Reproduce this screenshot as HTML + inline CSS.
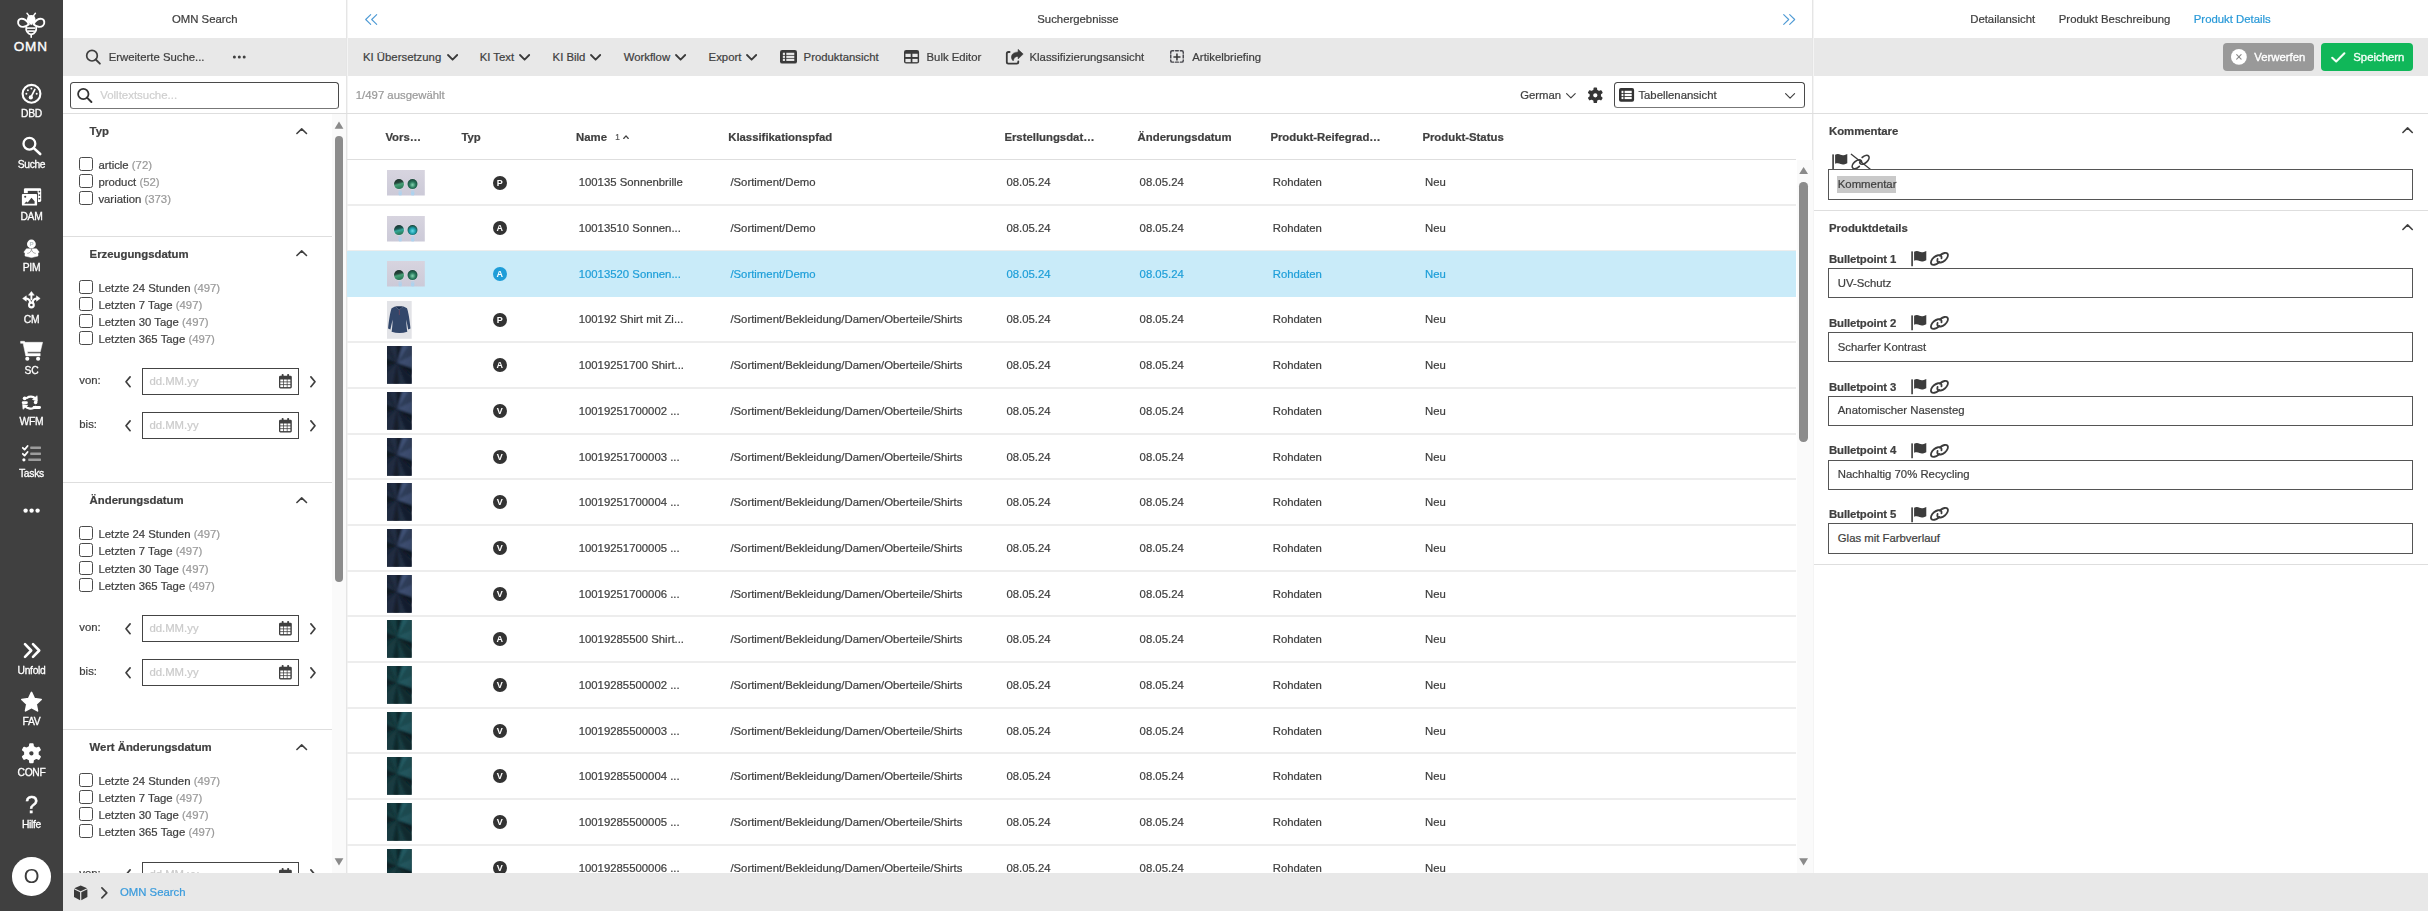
<!DOCTYPE html>
<html lang="de"><head><meta charset="utf-8"><title>OMN Search</title>
<style>
*{box-sizing:border-box;margin:0;padding:0}
html,body{width:2428px;height:911px;overflow:hidden;background:#fff}
body{font-family:"Liberation Sans",sans-serif;font-size:11.35px;color:#3f3f3f;position:relative;line-height:1}
#app{position:absolute;left:0;top:0;width:2428px;height:911px;overflow:hidden;filter:blur(0.38px)}
.a{position:absolute}
.t{position:absolute;white-space:nowrap;line-height:14px;height:14px;-webkit-text-stroke:0.22px}
.b{font-weight:bold}
.g{color:#9a9a9a}
.bl{color:#1f9fd9}
.hl{position:absolute;height:2px;background:#ededed;margin-top:-0.5px}
.hl1{position:absolute;height:1px;background:#dedede}
.vl{position:absolute;width:2px;background:linear-gradient(to right,#e5e5e5 50%,#f4f4f4 50%)}
.cb{position:absolute;width:14px;height:14px;border:1px solid #4a4a4a;border-radius:2.5px;background:#fff}
.di{position:absolute;left:142px;width:157px;height:27px;border:1px solid #444;background:#fff}
.inp{position:absolute;left:1828px;width:585px;height:30px;border:1px solid #555;background:#fff}
.nav{position:absolute;left:0;top:0;width:63px;height:911px;background:#404040}
.nl{position:absolute;left:0;width:63px;text-align:center;color:#fff;font-size:10.3px;line-height:12px;height:12px;letter-spacing:-0.25px;-webkit-text-stroke:0.3px #fff}
svg{position:absolute;overflow:visible}
.clip{position:absolute;overflow:hidden}
</style></head>
<body>
<div id="app">
<div class="a" style="left:63px;top:38.2px;width:2365px;height:37.6px;background:#e8e8e8"></div>
<div class="a" style="left:63px;top:873.3px;width:2365px;height:38px;background:#e8e8e8"></div>
<div class="vl" style="left:346px;top:0;height:873.3px"></div>
<div class="vl" style="left:1812px;top:0;height:873.3px"></div>
<div class="hl1" style="left:63px;top:113px;width:2365px"></div>
<div class="nav"></div>
<svg style="left:0;top:0" width="63" height="911" viewBox="0 0 63 911"><g fill="none" stroke="#fff" stroke-width="1.9" stroke-linejoin="round">
<path d="M28.900 24.300 C27.400 20.300 23.600 18.300 20.600 18.900 C17.600 19.500 17.400 23.700 19.400 25.600 C21.800 27.800 26 27 28.900 24.300 Z"/>
<path d="M33.500 24.300 C35 20.300 38.800 18.300 41.800 18.900 C44.800 19.500 45 23.700 43 25.600 C40.600 27.800 36.400 27 33.500 24.300 Z"/>
<path d="M26.200 26.400 C25.600 30.600 27.600 33.600 31.200 34.600 C34.800 33.600 36.800 30.600 36.200 26.400" stroke-width="1.7"/>
<path d="M31.200 34.400 L31.200 37.300" stroke-width="1.600" stroke-linecap="round"/>
</g>
<circle cx="31.200" cy="19.300" r="4.300" fill="#fff"/>
<path d="M27.300 21 L31.200 25.200 L35.100 21 Z" fill="#fff"/>
<path d="M27 13.300 L29.600 16.600 M35.400 13.300 L32.800 16.600" stroke="#fff" stroke-width="1.500" stroke-linecap="round"/>
<rect x="27" y="27.300" width="8.400" height="1.600" fill="#fff"/>
<rect x="27.500" y="30.300" width="7.400" height="1.600" fill="#fff"/></svg>
<div class="a" style="left:-1.1px;top:38.6px;width:63px;text-align:center;color:#fff;font-size:13.6px;line-height:15px;letter-spacing:0.7px;padding-left:0.7px;-webkit-text-stroke:0.35px #fff">OMN</div>
<svg style="left:0;top:0" width="63" height="911" viewBox="0 0 63 911"><circle cx="31.5" cy="93.8" r="8.9" fill="none" stroke="#fff" stroke-width="2.1"/>
<circle cx="30.8" cy="97.4" r="2.1" fill="#fff"/>
<path d="M30.8 97.400 L34.9 89.4" stroke="#fff" stroke-width="1.7" stroke-linecap="round"/>
<circle cx="26.4" cy="93.8" r="1" fill="#fff"/><circle cx="27.9" cy="90.2" r="1" fill="#fff"/><circle cx="31.4" cy="88.6" r="1" fill="#fff"/><circle cx="36.7" cy="93.8" r="1" fill="#fff"/></svg>
<div class="nl" style="top:108.00px;letter-spacing:-0.25px">DBD</div>
<svg style="left:0;top:0" width="63" height="911" viewBox="0 0 63 911"><circle cx="29.4" cy="143.7" r="5.9" fill="none" stroke="#fff" stroke-width="2.3"/><path d="M33.8 148.1 L40.2 154" stroke="#fff" stroke-width="2.6" stroke-linecap="round"/></svg>
<div class="nl" style="top:159.00px;letter-spacing:-0.35px">Suche</div>
<svg style="left:0;top:0" width="63" height="911" viewBox="0 0 63 911"><rect x="23.900" y="188.200" width="17.300" height="13.700" rx="1.300" fill="#fff"/>
<rect x="27.800" y="190.900" width="9.800" height="11.500" fill="#404040"/>
<circle cx="39.400" cy="191.600" r="0.850" fill="#404040"/><circle cx="39.400" cy="195.100" r="0.850" fill="#404040"/><circle cx="39.400" cy="198.600" r="0.850" fill="#404040"/>
<rect x="21" y="193.100" width="17" height="13.400" fill="#404040"/>
<rect x="21.900" y="194" width="15.200" height="11.600" rx="0.900" fill="#fff"/>
<path d="M24.300 203.700 L26.300 201.400 L27.700 202.400 L31.500 197.700 L34.600 201.300 L34.600 203.700 Z" fill="#404040"/><circle cx="25.200" cy="196.700" r="1.050" fill="#404040"/></svg>
<div class="nl" style="top:211.00px;letter-spacing:-0.25px">DAM</div>
<svg style="left:0;top:0" width="63" height="911" viewBox="0 0 63 911"><circle cx="31.400" cy="244" r="4.400" fill="#fff"/>
<text x="31.500" y="246.300" font-size="6.200" font-weight="bold" text-anchor="middle" fill="#b4c0c2" font-family="Liberation Sans, sans-serif">P</text>
<path d="M23.900 252.100 L26.400 248.800 L36.600 248.800 L39.200 252.100 L38 253.300 L38 256 L31.500 257.600 L25 256 L25 253.300 Z" fill="#fff" stroke="#fff" stroke-width="0.500" stroke-linejoin="round"/>
<path d="M31.500 248.600 C31.400 251.600 29.800 253.200 27.200 253.400 M31.500 248.600 C31.600 251.600 33.200 253.200 35.800 253.400" fill="none" stroke="#6a6a6a" stroke-width="0.550"/></svg>
<div class="nl" style="top:262.00px;letter-spacing:-0.25px">PIM</div>
<svg style="left:0;top:0" width="63" height="911" viewBox="0 0 63 911"><g fill="none" stroke="#fff" stroke-width="2.100" stroke-linecap="round" stroke-linejoin="round">
<circle cx="31.400" cy="305" r="2.350"/>
<path d="M31.400 299.400 L31.400 294.500" stroke-width="1.900"/>
<path d="M30.200 302.600 C29.800 299.600 28.400 298.500 25.600 298.500"/>
<path d="M32.600 302.600 C33 299.600 34.400 298.500 37.200 298.500"/>
</g>
<path d="M31.400 291.500 L34.300 295.200 L28.500 295.200 Z" fill="#fff" stroke="#fff" stroke-width="0.500" stroke-linejoin="round"/>
<path d="M22.600 298.500 L26.300 295.800 L26.300 301.200 Z" fill="#fff" stroke="#fff" stroke-width="0.500" stroke-linejoin="round"/>
<path d="M40.200 298.500 L36.500 295.800 L36.500 301.200 Z" fill="#fff" stroke="#fff" stroke-width="0.500" stroke-linejoin="round"/></svg>
<div class="nl" style="top:314.00px;letter-spacing:-0.25px">CM</div>
<svg style="left:0;top:0" width="63" height="911" viewBox="0 0 63 911"><path d="M20.600 341.300 L24.400 341.300 L25.100 342.300 L42.600 342.300 L40.300 351.800 L27.400 351.800 L27.700 353.400 L40.200 353.400 L40.200 355.900 L25.800 355.900 L23.100 343.300 L20.600 343.300 Z" fill="#fff" stroke="#fff" stroke-width="0.500" stroke-linejoin="round"/>
<circle cx="27.300" cy="358.800" r="2.050" fill="#fff"/><circle cx="38.100" cy="358.800" r="2.050" fill="#fff"/></svg>
<div class="nl" style="top:365.00px;letter-spacing:-0.25px">SC</div>
<svg style="left:0;top:0" width="63" height="911" viewBox="0 0 63 911"><g fill="none" stroke="#fff" stroke-width="2.2" stroke-linecap="round">
<path d="M27 397.800 C29.200 396.200 33 396.200 35.200 398.300"/>
<path d="M25 405.800 C27 408.600 31 409.200 33.600 408"/>
</g>
<path d="M37.100 395.700 L37.400 401.300 L32.500 399.500 Z" fill="#fff" stroke="#fff" stroke-width="0.6" stroke-linejoin="round"/>
<path d="M22.600 404.500 L27.800 405.300 L23 409.300 Z" fill="#fff" stroke="#fff" stroke-width="0.6" stroke-linejoin="round"/>
<circle cx="24.700" cy="398.300" r="1.900" fill="#fff"/><rect x="21.800" y="401.200" width="6" height="2.900" rx="1.300" fill="#fff"/>
<circle cx="35.600" cy="402.400" r="1.800" fill="#fff"/><path d="M32.800 408.700 C32.800 404.800 38.400 404.800 38.400 408.700 Z" fill="#fff"/><rect x="32.600" y="406" width="8.400" height="2.900" rx="1.400" fill="#fff"/></svg>
<div class="nl" style="top:416.00px;letter-spacing:-0.25px">WFM</div>
<svg style="left:0;top:0" width="63" height="911" viewBox="0 0 63 911"><g fill="none" stroke="#fff" stroke-width="1.8" stroke-linecap="round" stroke-linejoin="round">
<path d="M22.800 447.8 L24.6 449.600 L27.600 446"/><path d="M22.800 453.8 L24.6 455.600 L27.600 452"/></g>
<circle cx="23.9" cy="459.8" r="1.6" fill="#fff"/>
<rect x="30.2" y="446.400" width="10.8" height="2.5" rx="0.6" fill="#9c9c9c"/><rect x="30.2" y="452.4" width="10.8" height="2.5" rx="0.6" fill="#9c9c9c"/><rect x="28.2" y="458.4" width="12.8" height="2.5" rx="0.6" fill="#9c9c9c"/></svg>
<div class="nl" style="top:468.00px;letter-spacing:-0.25px">Tasks</div>
<svg style="left:0;top:0" width="63" height="911" viewBox="0 0 63 911"><circle cx="25.6" cy="510.6" r="2.2" fill="#fff"/><circle cx="31.6" cy="510.6" r="2.2" fill="#fff"/><circle cx="37.6" cy="510.6" r="2.2" fill="#fff"/></svg>
<svg style="left:0;top:0" width="63" height="911" viewBox="0 0 63 911"><g fill="none" stroke="#fff" stroke-width="2.6" stroke-linecap="round" stroke-linejoin="round"><path d="M25 644.2 L31.2 650.5 L25 656.8"/><path d="M33 644.2 L39.2 650.5 L33 656.8"/></g></svg>
<div class="nl" style="top:665.00px;letter-spacing:-0.3px">Unfold</div>
<svg style="left:0;top:0" width="63" height="911" viewBox="0 0 63 911"><path d="M31.50 692.40 L34.38 698.64 L41.20 699.45 L36.16 704.11 L37.50 710.85 L31.50 707.50 L25.50 710.85 L26.84 704.11 L21.80 699.45 L28.62 698.64Z" fill="#fff" stroke="#fff" stroke-width="1.6" stroke-linejoin="round"/></svg>
<div class="nl" style="top:716.00px;letter-spacing:-0.25px">FAV</div>
<svg style="left:0;top:0" width="1" height="1"><path d="M30.04 744.11 L32.76 744.11 L33.13 746.86 L36.11 748.59 L38.68 747.53 L40.04 749.88 L37.84 751.57 L37.84 755.03 L40.04 756.72 L38.68 759.07 L36.11 758.01 L33.13 759.74 L32.76 762.49 L30.04 762.49 L29.67 759.74 L26.69 758.01 L24.12 759.07 L22.76 756.72 L24.96 755.03 L24.96 751.57 L22.76 749.88 L24.12 747.53 L26.69 748.59 L29.67 746.86Z M28.37 753.30 a3.03 3.03 0 1 0 6.06 0 a3.03 3.03 0 1 0 -6.06 0Z" fill="#fff" fill-rule="evenodd" stroke="#fff" stroke-width="1.72" stroke-linejoin="round"/></svg>
<div class="nl" style="top:767.00px;letter-spacing:-0.3px">CONF</div>
<div class="a" style="left:0;top:792.00px;width:63px;text-align:center;color:#fff;font-size:23.5px;line-height:26px;height:26px;-webkit-text-stroke:0.4px #fff">?</div>
<div class="nl" style="top:819.00px;letter-spacing:-0.3px">Hilfe</div>
<div class="a" style="left:12.2px;top:857.2px;width:38.5px;height:38.5px;border-radius:50%;background:#fff"></div>
<div class="a" style="left:0;top:864.00px;width:63px;text-align:center;color:#3c3c3c;font-size:20.2px;line-height:24px;height:24px;padding-left:0.2px">O</div>
<div class="t " style="left:172.0px;top:12.00px;">OMN Search</div>
<svg style="left:0;top:0" width="1" height="1"><circle cx="92.0" cy="55.7" r="5.3" fill="none" stroke="#3f3f3f" stroke-width="1.7"/><path d="M95.72 59.47 L99.9 63.7" stroke="#3f3f3f" stroke-width="1.87" stroke-linecap="round"/></svg>
<div class="t " style="left:108.7px;top:50.00px;">Erweiterte Suche...</div>
<svg style="left:0;top:0" width="1" height="1"><circle cx="234.4" cy="57" r="1.5" fill="#3f3f3f"/><circle cx="239.3" cy="57" r="1.5" fill="#3f3f3f"/><circle cx="244.2" cy="57" r="1.5" fill="#3f3f3f"/></svg>
<div class="a" style="left:70px;top:82px;width:268.6px;height:26.6px;border:1px solid #4a4a4a;border-bottom:1.6px solid #777;border-radius:3.5px;background:#fff"></div>
<svg style="left:0;top:0" width="1" height="1"><circle cx="83.3" cy="94.0" r="5.2" fill="none" stroke="#333" stroke-width="1.8"/><path d="M87.00 97.65 L91.4 102.0" stroke="#333" stroke-width="1.98" stroke-linecap="round"/></svg>
<div class="t " style="left:100.2px;top:88.00px;font-size:11.45px;color:#cfcfcf">Volltextsuche...</div>
<div class="clip" style="left:63px;top:114px;width:283px;height:759.4px">
<div class="t b" style="left:26.6px;top:10.00px;">Typ</div>
<svg style="left:233.3px;top:13.7px" width="11.4" height="6.4" viewBox="0 0 11.4 6.4"><path d="M0.9 5.5 L5.7 0.9 L10.5 5.5" fill="none" stroke="#3f3f3f" stroke-width="1.6" stroke-linecap="round" stroke-linejoin="round"/></svg>
<div class="cb" style="left:16.2px;top:43.0px"></div>
<div class="t " style="left:35.4px;top:44.00px;">article <span class="g">(72)</span></div>
<div class="cb" style="left:16.2px;top:60.2px"></div>
<div class="t " style="left:35.4px;top:61.00px;">product <span class="g">(52)</span></div>
<div class="cb" style="left:16.2px;top:77.3px"></div>
<div class="t " style="left:35.4px;top:78.00px;">variation <span class="g">(373)</span></div>
<div class="hl1" style="left:0;top:121.5px;width:269px"></div>
<div class="t b" style="left:26.6px;top:133.00px;">Erzeugungsdatum</div>
<svg style="left:233.3px;top:136.3px" width="11.4" height="6.4" viewBox="0 0 11.4 6.4"><path d="M0.9 5.5 L5.7 0.9 L10.5 5.5" fill="none" stroke="#3f3f3f" stroke-width="1.6" stroke-linecap="round" stroke-linejoin="round"/></svg>
<div class="cb" style="left:16.2px;top:165.6px"></div>
<div class="t " style="left:35.4px;top:167.00px;">Letzte 24 Stunden <span class="g">(497)</span></div>
<div class="cb" style="left:16.2px;top:182.8px"></div>
<div class="t " style="left:35.4px;top:184.00px;">Letzten 7 Tage <span class="g">(497)</span></div>
<div class="cb" style="left:16.2px;top:199.9px"></div>
<div class="t " style="left:35.4px;top:201.00px;">Letzten 30 Tage <span class="g">(497)</span></div>
<div class="cb" style="left:16.2px;top:217.0px"></div>
<div class="t " style="left:35.4px;top:218.00px;">Letzten 365 Tage <span class="g">(497)</span></div>
<div class="t " style="left:16.3px;top:259.00px;">von:</div>
<svg style="left:61.6px;top:262.0px" width="6" height="11.6" viewBox="0 0 6 11.6"><path d="M5.1 0.9 L1 5.8 L5.1 10.7" fill="none" stroke="#3f3f3f" stroke-width="1.7" stroke-linecap="round" stroke-linejoin="round"/></svg>
<div class="di" style="left:79px;top:254.4px"></div>
<div class="t " style="left:86.4px;top:260.00px;color:#cbcbcb">dd.MM.yy</div>
<svg style="left:215.7px;top:260.3px" width="12.8" height="14.4" viewBox="0 0 12.8 14.4"><rect x="2.7" y="0" width="1.9" height="3.4" rx="0.8" fill="#3f3f3f"/><rect x="8.2" y="0" width="1.9" height="3.4" rx="0.8" fill="#3f3f3f"/><rect x="0" y="1.7" width="12.8" height="12.7" rx="1.4" fill="#3f3f3f"/><rect x="1.30" y="5.50" width="2.9" height="2.0" fill="#fff"/><rect x="1.30" y="8.30" width="2.9" height="2.0" fill="#fff"/><rect x="1.30" y="11.10" width="2.9" height="2.0" fill="#fff"/><rect x="4.90" y="5.50" width="2.9" height="2.0" fill="#fff"/><rect x="4.90" y="8.30" width="2.9" height="2.0" fill="#fff"/><rect x="4.90" y="11.10" width="2.9" height="2.0" fill="#fff"/><rect x="8.50" y="5.50" width="2.9" height="2.0" fill="#fff"/><rect x="8.50" y="8.30" width="2.9" height="2.0" fill="#fff"/><rect x="8.50" y="11.10" width="2.9" height="2.0" fill="#fff"/></svg>
<svg style="left:247.2px;top:262.0px" width="6" height="11.6" viewBox="0 0 6 11.6"><path d="M0.9 0.9 L5 5.8 L0.900 10.7" fill="none" stroke="#3f3f3f" stroke-width="1.7" stroke-linecap="round" stroke-linejoin="round"/></svg>
<div class="t " style="left:16.3px;top:303.00px;">bis:</div>
<svg style="left:61.6px;top:306.0px" width="6" height="11.6" viewBox="0 0 6 11.6"><path d="M5.1 0.9 L1 5.8 L5.1 10.7" fill="none" stroke="#3f3f3f" stroke-width="1.7" stroke-linecap="round" stroke-linejoin="round"/></svg>
<div class="di" style="left:79px;top:298.4px"></div>
<div class="t " style="left:86.4px;top:304.00px;color:#cbcbcb">dd.MM.yy</div>
<svg style="left:215.7px;top:304.3px" width="12.8" height="14.4" viewBox="0 0 12.8 14.4"><rect x="2.7" y="0" width="1.9" height="3.4" rx="0.8" fill="#3f3f3f"/><rect x="8.2" y="0" width="1.9" height="3.4" rx="0.8" fill="#3f3f3f"/><rect x="0" y="1.7" width="12.8" height="12.7" rx="1.4" fill="#3f3f3f"/><rect x="1.30" y="5.50" width="2.9" height="2.0" fill="#fff"/><rect x="1.30" y="8.30" width="2.9" height="2.0" fill="#fff"/><rect x="1.30" y="11.10" width="2.9" height="2.0" fill="#fff"/><rect x="4.90" y="5.50" width="2.9" height="2.0" fill="#fff"/><rect x="4.90" y="8.30" width="2.9" height="2.0" fill="#fff"/><rect x="4.90" y="11.10" width="2.9" height="2.0" fill="#fff"/><rect x="8.50" y="5.50" width="2.9" height="2.0" fill="#fff"/><rect x="8.50" y="8.30" width="2.9" height="2.0" fill="#fff"/><rect x="8.50" y="11.10" width="2.9" height="2.0" fill="#fff"/></svg>
<svg style="left:247.2px;top:306.0px" width="6" height="11.6" viewBox="0 0 6 11.6"><path d="M0.9 0.9 L5 5.8 L0.900 10.7" fill="none" stroke="#3f3f3f" stroke-width="1.7" stroke-linecap="round" stroke-linejoin="round"/></svg>
<div class="hl1" style="left:0;top:368.1px;width:269px"></div>
<div class="t b" style="left:26.6px;top:379.00px;">Änderungsdatum</div>
<svg style="left:233.3px;top:382.9px" width="11.4" height="6.4" viewBox="0 0 11.4 6.4"><path d="M0.9 5.5 L5.7 0.9 L10.5 5.5" fill="none" stroke="#3f3f3f" stroke-width="1.6" stroke-linecap="round" stroke-linejoin="round"/></svg>
<div class="cb" style="left:16.2px;top:412.2px"></div>
<div class="t " style="left:35.4px;top:413.00px;">Letzte 24 Stunden <span class="g">(497)</span></div>
<div class="cb" style="left:16.2px;top:429.4px"></div>
<div class="t " style="left:35.4px;top:430.00px;">Letzten 7 Tage <span class="g">(497)</span></div>
<div class="cb" style="left:16.2px;top:446.5px"></div>
<div class="t " style="left:35.4px;top:448.00px;">Letzten 30 Tage <span class="g">(497)</span></div>
<div class="cb" style="left:16.2px;top:463.6px"></div>
<div class="t " style="left:35.4px;top:465.00px;">Letzten 365 Tage <span class="g">(497)</span></div>
<div class="t " style="left:16.3px;top:506.00px;">von:</div>
<svg style="left:61.6px;top:508.6px" width="6" height="11.6" viewBox="0 0 6 11.6"><path d="M5.1 0.9 L1 5.8 L5.1 10.7" fill="none" stroke="#3f3f3f" stroke-width="1.7" stroke-linecap="round" stroke-linejoin="round"/></svg>
<div class="di" style="left:79px;top:501.0px"></div>
<div class="t " style="left:86.4px;top:507.00px;color:#cbcbcb">dd.MM.yy</div>
<svg style="left:215.7px;top:506.9px" width="12.8" height="14.4" viewBox="0 0 12.8 14.4"><rect x="2.7" y="0" width="1.9" height="3.4" rx="0.8" fill="#3f3f3f"/><rect x="8.2" y="0" width="1.9" height="3.4" rx="0.8" fill="#3f3f3f"/><rect x="0" y="1.7" width="12.8" height="12.7" rx="1.4" fill="#3f3f3f"/><rect x="1.30" y="5.50" width="2.9" height="2.0" fill="#fff"/><rect x="1.30" y="8.30" width="2.9" height="2.0" fill="#fff"/><rect x="1.30" y="11.10" width="2.9" height="2.0" fill="#fff"/><rect x="4.90" y="5.50" width="2.9" height="2.0" fill="#fff"/><rect x="4.90" y="8.30" width="2.9" height="2.0" fill="#fff"/><rect x="4.90" y="11.10" width="2.9" height="2.0" fill="#fff"/><rect x="8.50" y="5.50" width="2.9" height="2.0" fill="#fff"/><rect x="8.50" y="8.30" width="2.9" height="2.0" fill="#fff"/><rect x="8.50" y="11.10" width="2.9" height="2.0" fill="#fff"/></svg>
<svg style="left:247.2px;top:508.6px" width="6" height="11.6" viewBox="0 0 6 11.6"><path d="M0.9 0.9 L5 5.8 L0.900 10.7" fill="none" stroke="#3f3f3f" stroke-width="1.7" stroke-linecap="round" stroke-linejoin="round"/></svg>
<div class="t " style="left:16.3px;top:550.00px;">bis:</div>
<svg style="left:61.6px;top:552.6px" width="6" height="11.6" viewBox="0 0 6 11.6"><path d="M5.1 0.9 L1 5.8 L5.1 10.7" fill="none" stroke="#3f3f3f" stroke-width="1.7" stroke-linecap="round" stroke-linejoin="round"/></svg>
<div class="di" style="left:79px;top:545.0px"></div>
<div class="t " style="left:86.4px;top:551.00px;color:#cbcbcb">dd.MM.yy</div>
<svg style="left:215.7px;top:550.9px" width="12.8" height="14.4" viewBox="0 0 12.8 14.4"><rect x="2.7" y="0" width="1.9" height="3.4" rx="0.8" fill="#3f3f3f"/><rect x="8.2" y="0" width="1.9" height="3.4" rx="0.8" fill="#3f3f3f"/><rect x="0" y="1.7" width="12.8" height="12.7" rx="1.4" fill="#3f3f3f"/><rect x="1.30" y="5.50" width="2.9" height="2.0" fill="#fff"/><rect x="1.30" y="8.30" width="2.9" height="2.0" fill="#fff"/><rect x="1.30" y="11.10" width="2.9" height="2.0" fill="#fff"/><rect x="4.90" y="5.50" width="2.9" height="2.0" fill="#fff"/><rect x="4.90" y="8.30" width="2.9" height="2.0" fill="#fff"/><rect x="4.90" y="11.10" width="2.9" height="2.0" fill="#fff"/><rect x="8.50" y="5.50" width="2.9" height="2.0" fill="#fff"/><rect x="8.50" y="8.30" width="2.9" height="2.0" fill="#fff"/><rect x="8.50" y="11.10" width="2.9" height="2.0" fill="#fff"/></svg>
<svg style="left:247.2px;top:552.6px" width="6" height="11.6" viewBox="0 0 6 11.6"><path d="M0.9 0.9 L5 5.8 L0.900 10.7" fill="none" stroke="#3f3f3f" stroke-width="1.7" stroke-linecap="round" stroke-linejoin="round"/></svg>
<div class="hl1" style="left:0;top:614.7px;width:269px"></div>
<div class="t b" style="left:26.6px;top:626.00px;">Wert Änderungsdatum</div>
<svg style="left:233.3px;top:629.5px" width="11.4" height="6.4" viewBox="0 0 11.4 6.4"><path d="M0.9 5.5 L5.7 0.9 L10.5 5.5" fill="none" stroke="#3f3f3f" stroke-width="1.6" stroke-linecap="round" stroke-linejoin="round"/></svg>
<div class="cb" style="left:16.2px;top:658.8px"></div>
<div class="t " style="left:35.4px;top:660.00px;">Letzte 24 Stunden <span class="g">(497)</span></div>
<div class="cb" style="left:16.2px;top:676.0px"></div>
<div class="t " style="left:35.4px;top:677.00px;">Letzten 7 Tage <span class="g">(497)</span></div>
<div class="cb" style="left:16.2px;top:693.1px"></div>
<div class="t " style="left:35.4px;top:694.00px;">Letzten 30 Tage <span class="g">(497)</span></div>
<div class="cb" style="left:16.2px;top:710.2px"></div>
<div class="t " style="left:35.4px;top:711.00px;">Letzten 365 Tage <span class="g">(497)</span></div>
<div class="t " style="left:16.3px;top:752.00px;">von:</div>
<svg style="left:61.6px;top:755.2px" width="6" height="11.6" viewBox="0 0 6 11.6"><path d="M5.1 0.9 L1 5.8 L5.1 10.7" fill="none" stroke="#3f3f3f" stroke-width="1.7" stroke-linecap="round" stroke-linejoin="round"/></svg>
<div class="di" style="left:79px;top:747.6px"></div>
<div class="t " style="left:86.4px;top:753.00px;color:#cbcbcb">dd.MM.yy</div>
<svg style="left:215.7px;top:753.5px" width="12.8" height="14.4" viewBox="0 0 12.8 14.4"><rect x="2.7" y="0" width="1.9" height="3.4" rx="0.8" fill="#3f3f3f"/><rect x="8.2" y="0" width="1.9" height="3.4" rx="0.8" fill="#3f3f3f"/><rect x="0" y="1.7" width="12.8" height="12.7" rx="1.4" fill="#3f3f3f"/><rect x="1.30" y="5.50" width="2.9" height="2.0" fill="#fff"/><rect x="1.30" y="8.30" width="2.9" height="2.0" fill="#fff"/><rect x="1.30" y="11.10" width="2.9" height="2.0" fill="#fff"/><rect x="4.90" y="5.50" width="2.9" height="2.0" fill="#fff"/><rect x="4.90" y="8.30" width="2.9" height="2.0" fill="#fff"/><rect x="4.90" y="11.10" width="2.9" height="2.0" fill="#fff"/><rect x="8.50" y="5.50" width="2.9" height="2.0" fill="#fff"/><rect x="8.50" y="8.30" width="2.9" height="2.0" fill="#fff"/><rect x="8.50" y="11.10" width="2.9" height="2.0" fill="#fff"/></svg>
<svg style="left:247.2px;top:755.2px" width="6" height="11.6" viewBox="0 0 6 11.6"><path d="M0.9 0.9 L5 5.8 L0.900 10.7" fill="none" stroke="#3f3f3f" stroke-width="1.7" stroke-linecap="round" stroke-linejoin="round"/></svg>
<div class="t " style="left:16.3px;top:796.00px;">bis:</div>
<svg style="left:61.6px;top:799.2px" width="6" height="11.6" viewBox="0 0 6 11.6"><path d="M5.1 0.9 L1 5.8 L5.1 10.7" fill="none" stroke="#3f3f3f" stroke-width="1.7" stroke-linecap="round" stroke-linejoin="round"/></svg>
<div class="di" style="left:79px;top:791.6px"></div>
<div class="t " style="left:86.4px;top:797.00px;color:#cbcbcb">dd.MM.yy</div>
<svg style="left:215.7px;top:797.5px" width="12.8" height="14.4" viewBox="0 0 12.8 14.4"><rect x="2.7" y="0" width="1.9" height="3.4" rx="0.8" fill="#3f3f3f"/><rect x="8.2" y="0" width="1.9" height="3.4" rx="0.8" fill="#3f3f3f"/><rect x="0" y="1.7" width="12.8" height="12.7" rx="1.4" fill="#3f3f3f"/><rect x="1.30" y="5.50" width="2.9" height="2.0" fill="#fff"/><rect x="1.30" y="8.30" width="2.9" height="2.0" fill="#fff"/><rect x="1.30" y="11.10" width="2.9" height="2.0" fill="#fff"/><rect x="4.90" y="5.50" width="2.9" height="2.0" fill="#fff"/><rect x="4.90" y="8.30" width="2.9" height="2.0" fill="#fff"/><rect x="4.90" y="11.10" width="2.9" height="2.0" fill="#fff"/><rect x="8.50" y="5.50" width="2.9" height="2.0" fill="#fff"/><rect x="8.50" y="8.30" width="2.9" height="2.0" fill="#fff"/><rect x="8.50" y="11.10" width="2.9" height="2.0" fill="#fff"/></svg>
<svg style="left:247.2px;top:799.2px" width="6" height="11.6" viewBox="0 0 6 11.6"><path d="M0.9 0.9 L5 5.8 L0.900 10.7" fill="none" stroke="#3f3f3f" stroke-width="1.7" stroke-linecap="round" stroke-linejoin="round"/></svg>
</div>
<div class="a" style="left:332px;top:114px;width:14px;height:759.3px;background:#fafafa"></div>
<svg style="left:0;top:0" width="1" height="1"><path d="M334.600 128.8 L343.4 128.8 L339 121.600 Z" fill="#8a8a8a"/><path d="M334.600 858.2 L343.4 858.2 L339 865.4 Z" fill="#8a8a8a"/></svg>
<div class="a" style="left:335px;top:136.2px;width:8.2px;height:445.6px;border-radius:4.1px;background:#8c8c8c"></div>
<svg style="left:74px;top:885.3px" width="13.4" height="15.3" viewBox="0 0 13.4 15.3"><path d="M6.7 0.4 L13.1 3.2 L6.7 6.2 L0.3 3.2 Z" fill="#3a3a3a"/><path d="M0 4.3 L6.1 7.2 L6.100 15.2 L0 12 Z" fill="#3a3a3a"/><path d="M13.400 4.3 L7.300 7.2 L7.300 15.2 L13.400 12 Z" fill="#3a3a3a"/></svg>
<svg style="left:100.8px;top:887px" width="6.8" height="11.8" viewBox="0 0 6.8 11.8"><path d="M0.900 0.900 L5.8 5.9 L0.900 10.9" fill="none" stroke="#3f3f3f" stroke-width="1.7" stroke-linecap="round" stroke-linejoin="round"/></svg>
<div class="t " style="left:120.0px;top:885.00px;color:#3a9bdc">OMN Search</div>
<svg style="left:365.4px;top:13.5px" width="12.4" height="11" viewBox="0 0 12.4 11"><g fill="none" stroke="#4f9bd5" stroke-width="1.1" stroke-linecap="round" stroke-linejoin="round"><path d="M5.700 0.6 L0.7 5.5 L5.700 10.4"/><path d="M11.700 0.6 L6.7 5.5 L11.700 10.4"/></g></svg>
<svg style="left:1783.2px;top:13.5px" width="12.4" height="11" viewBox="0 0 12.4 11"><g fill="none" stroke="#4f9bd5" stroke-width="1.1" stroke-linecap="round" stroke-linejoin="round"><path d="M0.7 0.6 L5.700 5.5 L0.7 10.4"/><path d="M6.7 0.6 L11.700 5.5 L6.7 10.4"/></g></svg>
<div class="t " style="left:1037.3px;top:12.00px;">Suchergebnisse</div>
<div class="t " style="left:363.0px;top:50.00px;">KI Übersetzung</div>
<svg style="left:446.6px;top:54px" width="11.2" height="6.8" viewBox="0 0 11.2 6.8"><path d="M1 1 L5.600 5.700 L10.2 1" fill="none" stroke="#3a3a3a" stroke-width="1.8" stroke-linecap="round" stroke-linejoin="round"/></svg>
<div class="t " style="left:479.7px;top:50.00px;">KI Text</div>
<svg style="left:519.4px;top:54px" width="11.2" height="6.8" viewBox="0 0 11.2 6.8"><path d="M1 1 L5.600 5.700 L10.2 1" fill="none" stroke="#3a3a3a" stroke-width="1.8" stroke-linecap="round" stroke-linejoin="round"/></svg>
<div class="t " style="left:552.6px;top:50.00px;">KI Bild</div>
<svg style="left:590.4px;top:54px" width="11.2" height="6.8" viewBox="0 0 11.2 6.8"><path d="M1 1 L5.600 5.700 L10.2 1" fill="none" stroke="#3a3a3a" stroke-width="1.8" stroke-linecap="round" stroke-linejoin="round"/></svg>
<div class="t " style="left:623.7px;top:50.00px;">Workflow</div>
<svg style="left:675.0px;top:54px" width="11.2" height="6.8" viewBox="0 0 11.2 6.8"><path d="M1 1 L5.600 5.700 L10.2 1" fill="none" stroke="#3a3a3a" stroke-width="1.8" stroke-linecap="round" stroke-linejoin="round"/></svg>
<div class="t " style="left:708.6px;top:50.00px;">Export</div>
<svg style="left:746.4px;top:54px" width="11.2" height="6.8" viewBox="0 0 11.2 6.8"><path d="M1 1 L5.600 5.700 L10.2 1" fill="none" stroke="#3a3a3a" stroke-width="1.8" stroke-linecap="round" stroke-linejoin="round"/></svg>
<svg style="left:780px;top:50.1px" width="17" height="13.6" viewBox="0 0 17 13.6"><rect x="0" y="0" width="17" height="13.6" rx="2.20" fill="#3a3a3a"/><rect x="2.85" y="2.75" width="2.10" height="2.20" fill="#e8e8e8"/><rect x="6.30" y="2.75" width="8.00" height="2.20" fill="#e8e8e8"/><rect x="2.85" y="5.75" width="2.10" height="2.20" fill="#e8e8e8"/><rect x="6.30" y="5.75" width="8.00" height="2.20" fill="#e8e8e8"/><rect x="2.85" y="8.75" width="2.10" height="2.20" fill="#e8e8e8"/><rect x="6.30" y="8.75" width="8.00" height="2.20" fill="#e8e8e8"/></svg>
<div class="t " style="left:803.6px;top:50.00px;">Produktansicht</div>
<svg style="left:903.6px;top:50.1px" width="15.1" height="13.6" viewBox="0 0 15.1 13.6"><rect x="0" y="0" width="15.1" height="13.6" rx="2.1" fill="#3a3a3a"/><rect x="1.45" y="3.75" width="5.25" height="3.25" fill="#e8e8e8"/><rect x="8.4" y="3.75" width="5.25" height="3.25" fill="#e8e8e8"/><rect x="1.45" y="8.900" width="5.25" height="3.25" fill="#e8e8e8"/><rect x="8.4" y="8.900" width="5.25" height="3.25" fill="#e8e8e8"/></svg>
<div class="t " style="left:926.5px;top:50.00px;">Bulk Editor</div>
<svg style="left:1005.2px;top:49px" width="18.4" height="15.8" viewBox="0 0 18.4 15.8"><path d="M4.600 3 L3.400 3 C2.400 3 1.800 3.600 1.800 4.600 L1.800 13.100 C1.800 14.100 2.400 14.700 3.400 14.700 L11.700 14.700 C12.700 14.700 13.300 14.100 13.300 13.100 L13.300 12.300" fill="none" stroke="#3a3a3a" stroke-width="1.8" stroke-linecap="round"/><path d="M13.100 0.300 L18.200 5.100 L13.100 9.900 L13.100 7.400 C10.400 7.400 8.900 8.600 8.200 11.900 C5.200 9.200 5.400 3.400 13.100 2.900 Z" fill="#3a3a3a" stroke="#3a3a3a" stroke-width="0.5" stroke-linejoin="round"/></svg>
<div class="t " style="left:1029.5px;top:50.00px;">Klassifizierungsansicht</div>
<svg style="left:1169.9px;top:50.1px" width="14" height="12.9" viewBox="0 0 14 12.9"><g fill="none" stroke="#45454b" stroke-width="1.45" stroke-linecap="round"><path d="M0.750 3.200 L0.750 2.200 Q0.750 0.750 2.200 0.750 L3.700 0.750"/><path d="M10.300 0.750 L11.800 0.750 Q13.250 0.750 13.250 2.200 L13.250 3.200"/><path d="M0.750 9.900 L0.750 10.700 Q0.750 12.150 2.200 12.150 L3.700 12.150"/><path d="M10.300 12.150 L11.800 12.150 Q13.250 12.150 13.250 10.700 L13.250 9.900"/><path d="M5.600 0.750 L8.300 0.750"/><path d="M5.600 12.150 L8.300 12.150"/><path d="M0.750 5 L0.750 7.900"/><path d="M13.250 5 L13.250 7.900"/></g><path d="M6.950 3.500 L6.950 10.600 M3.400 7 L10.500 7" stroke="#3a3a3a" stroke-width="1.55"/></svg>
<div class="t " style="left:1192.3px;top:50.00px;">Artikelbriefing</div>
<div class="t g" style="left:355.8px;top:88.00px;">1/497 ausgewählt</div>
<div class="t " style="left:1520.2px;top:88.00px;">German</div>
<svg style="left:1566.2px;top:92.6px" width="9.8" height="5.6" viewBox="0 0 9.8 5.6"><path d="M0.600 0.600 L4.900 4.900 L9.200 0.600" fill="none" stroke="#3f3f3f" stroke-width="1.15" stroke-linecap="round" stroke-linejoin="round"/></svg>
<svg style="left:0;top:0" width="1" height="1"><path d="M1594.25 88.20 L1596.35 88.20 L1596.63 90.33 L1598.94 91.66 L1600.92 90.84 L1601.97 92.66 L1600.27 93.97 L1600.27 96.63 L1601.97 97.94 L1600.92 99.76 L1598.94 98.94 L1596.63 100.27 L1596.35 102.40 L1594.25 102.40 L1593.97 100.27 L1591.66 98.94 L1589.68 99.76 L1588.63 97.94 L1590.33 96.63 L1590.33 93.97 L1588.63 92.66 L1589.68 90.84 L1591.66 91.66 L1593.97 90.33Z M1592.49 95.30 a2.81 2.81 0 1 0 5.62 0 a2.81 2.81 0 1 0 -5.62 0Z" fill="#353535" fill-rule="evenodd" stroke="#353535" stroke-width="1.33" stroke-linejoin="round"/></svg>
<div class="a" style="left:1614.4px;top:81.9px;width:190.4px;height:26.5px;border:1px solid #4a4a4a;border-bottom:1.5px solid #777;border-radius:3.5px;background:#fff"></div>
<svg style="left:1619.3px;top:88.2px" width="15.1" height="13.8" viewBox="0 0 15.1 13.8"><rect x="0" y="0" width="15.1" height="13.8" rx="1.95" fill="#333"/><rect x="2.53" y="2.79" width="1.87" height="2.23" fill="#fff"/><rect x="5.60" y="2.79" width="7.11" height="2.23" fill="#fff"/><rect x="2.53" y="5.83" width="1.87" height="2.23" fill="#fff"/><rect x="5.60" y="5.83" width="7.11" height="2.23" fill="#fff"/><rect x="2.53" y="8.88" width="1.87" height="2.23" fill="#fff"/><rect x="5.60" y="8.88" width="7.11" height="2.23" fill="#fff"/></svg>
<div class="t " style="left:1638.4px;top:88.00px;">Tabellenansicht</div>
<svg style="left:1785.2px;top:92.6px" width="10.2" height="5.8" viewBox="0 0 10.2 5.8"><path d="M0.600 0.600 L5.100 5.100 L9.600 0.600" fill="none" stroke="#3f3f3f" stroke-width="1.15" stroke-linecap="round" stroke-linejoin="round"/></svg>
<div class="t b" style="left:385.4px;top:130.00px;">Vors…</div>
<div class="t b" style="left:461.4px;top:130.00px;">Typ</div>
<div class="t b" style="left:576.1px;top:130.00px;">Name</div>
<div class="t b" style="left:728.2px;top:130.00px;">Klassifikationspfad</div>
<div class="t b" style="left:1004.4px;top:130.00px;">Erstellungsdat…</div>
<div class="t b" style="left:1137.6px;top:130.00px;">Änderungsdatum</div>
<div class="t b" style="left:1270.4px;top:130.00px;">Produkt-Reifegrad…</div>
<div class="t b" style="left:1422.4px;top:130.00px;">Produkt-Status</div>
<div class="t " style="left:615.2px;top:131.00px;font-size:8.2px;color:#555">1</div>
<svg style="left:622.6px;top:134.9px" width="6" height="4.2" viewBox="0 0 6 4.2"><path d="M0.700 3.500 L3 0.800 L5.300 3.500" fill="none" stroke="#3f3f3f" stroke-width="1.2" stroke-linecap="round" stroke-linejoin="round"/></svg>
<div class="hl1" style="left:347.1px;top:159.2px;width:1449px"></div>
<div class="clip" style="left:347.1px;top:0;width:1465px;height:873.4px">
<div class="hl" style="left:0;top:204.92px;width:1449px"></div>
<svg style="left:40.1px;top:169.9px" width="37.8" height="25.5" viewBox="0 0 37.8 25.5"><defs>
<linearGradient id="ga0" x1="0" y1="0" x2="0.25" y2="1"><stop offset="0" stop-color="#1c2c26"/><stop offset="0.42" stop-color="#24463b"/><stop offset="0.62" stop-color="#47a077"/><stop offset="1" stop-color="#2a7a58"/></linearGradient>
<radialGradient id="gb0" cx="50%" cy="58%" r="55%"><stop offset="0" stop-color="#84d6b0"/><stop offset="0.55" stop-color="#2a7a5e"/><stop offset="1" stop-color="#1a4a3c"/></radialGradient>
<linearGradient id="gc0" x1="0" y1="0" x2="0" y2="1"><stop offset="0" stop-color="#a9d6f3" stop-opacity="0.1"/><stop offset="0.6" stop-color="#a4d4f4" stop-opacity="0.95"/><stop offset="1" stop-color="#a9d6f3" stop-opacity="0.8"/></linearGradient>
<linearGradient id="gd0" x1="0" y1="0" x2="0" y2="1"><stop offset="0" stop-color="#d7d4df"/><stop offset="1" stop-color="#cccad8"/></linearGradient>
<filter id="gf0" x="-10%" y="-10%" width="120%" height="120%"><feGaussianBlur stdDeviation="0.55"/></filter>
<clipPath id="gp0"><rect width="37.8" height="25.5"/></clipPath>
</defs>
<rect width="37.8" height="25.5" fill="url(#gd0)"/>
<g clip-path="url(#gp0)"><g filter="url(#gf0)">
<ellipse cx="13.200" cy="22.600" rx="1.700" ry="4.200" fill="url(#gc0)" opacity="0.8"/><ellipse cx="25.700" cy="22.600" rx="1.700" ry="4.200" fill="url(#gc0)" opacity="0.9"/>
<circle cx="12" cy="14.100" r="5.600" fill="#e3e1e8" opacity="0.7"/><circle cx="25.500" cy="14.100" r="5.600" fill="#e3e1e8" opacity="0.7"/>
<circle cx="12" cy="14.100" r="5" fill="url(#ga0)"/><circle cx="25.500" cy="14.100" r="5" fill="url(#gb0)"/>
</g></g></svg>
<div class="a" style="left:145.8px;top:175.74px;width:13.8px;height:13.8px;border-radius:50%;background:#333;color:#fff;font-weight:bold;font-size:9px;line-height:13.8px;text-align:center;padding-top:0.9px">P</div>
<div class="t " style="left:231.6px;top:175.00px;">100135 Sonnenbrille</div>
<div class="t " style="left:383.3px;top:175.00px;">/Sortiment/Demo</div>
<div class="t " style="left:659.3px;top:175.00px;">08.05.24</div>
<div class="t " style="left:792.5px;top:175.00px;">08.05.24</div>
<div class="t " style="left:925.6px;top:175.00px;">Rohdaten</div>
<div class="t " style="left:1077.9px;top:175.00px;">Neu</div>
<div class="hl" style="left:0;top:250.59px;width:1449px"></div>
<svg style="left:40.1px;top:215.6px" width="37.8" height="25.5" viewBox="0 0 37.8 25.5"><defs>
<linearGradient id="ga1" x1="0" y1="0" x2="0.25" y2="1"><stop offset="0" stop-color="#1c2c26"/><stop offset="0.42" stop-color="#1c5552"/><stop offset="0.62" stop-color="#35a89a"/><stop offset="1" stop-color="#2a7a58"/></linearGradient>
<radialGradient id="gb1" cx="50%" cy="58%" r="55%"><stop offset="0" stop-color="#66dde8"/><stop offset="0.55" stop-color="#1a9aa8"/><stop offset="1" stop-color="#1a4a3c"/></radialGradient>
<linearGradient id="gc1" x1="0" y1="0" x2="0" y2="1"><stop offset="0" stop-color="#a9d6f3" stop-opacity="0.1"/><stop offset="0.6" stop-color="#a4d4f4" stop-opacity="0.95"/><stop offset="1" stop-color="#a9d6f3" stop-opacity="0.8"/></linearGradient>
<linearGradient id="gd1" x1="0" y1="0" x2="0" y2="1"><stop offset="0" stop-color="#d7d4df"/><stop offset="1" stop-color="#cccad8"/></linearGradient>
<filter id="gf1" x="-10%" y="-10%" width="120%" height="120%"><feGaussianBlur stdDeviation="0.55"/></filter>
<clipPath id="gp1"><rect width="37.8" height="25.5"/></clipPath>
</defs>
<rect width="37.8" height="25.5" fill="url(#gd1)"/>
<g clip-path="url(#gp1)"><g filter="url(#gf1)">
<ellipse cx="13.200" cy="22.600" rx="1.700" ry="4.200" fill="url(#gc1)" opacity="0.8"/><ellipse cx="25.700" cy="22.600" rx="1.700" ry="4.200" fill="url(#gc1)" opacity="0.9"/>
<circle cx="12" cy="14.100" r="5.600" fill="#e3e1e8" opacity="0.7"/><circle cx="25.500" cy="14.100" r="5.600" fill="#e3e1e8" opacity="0.7"/>
<circle cx="12" cy="14.100" r="5" fill="url(#ga1)"/><circle cx="25.500" cy="14.100" r="5" fill="url(#gb1)"/>
</g></g></svg>
<div class="a" style="left:145.8px;top:221.41px;width:13.8px;height:13.8px;border-radius:50%;background:#333;color:#fff;font-weight:bold;font-size:9px;line-height:13.8px;text-align:center;padding-top:0.9px">A</div>
<div class="t " style="left:231.6px;top:221.00px;">10013510 Sonnen...</div>
<div class="t " style="left:383.3px;top:221.00px;">/Sortiment/Demo</div>
<div class="t " style="left:659.3px;top:221.00px;">08.05.24</div>
<div class="t " style="left:792.5px;top:221.00px;">08.05.24</div>
<div class="t " style="left:925.6px;top:221.00px;">Rohdaten</div>
<div class="t " style="left:1077.9px;top:221.00px;">Neu</div>
<div class="a" style="left:0;top:250.84px;width:1449px;height:45.97px;background:#c9ebf9"></div>
<svg style="left:40.1px;top:261.2px" width="37.8" height="25.5" viewBox="0 0 37.8 25.5"><defs>
<linearGradient id="ga2" x1="0" y1="0" x2="0.25" y2="1"><stop offset="0" stop-color="#1c2c26"/><stop offset="0.42" stop-color="#24463b"/><stop offset="0.62" stop-color="#47a077"/><stop offset="1" stop-color="#2a7a58"/></linearGradient>
<radialGradient id="gb2" cx="50%" cy="58%" r="55%"><stop offset="0" stop-color="#84d6b0"/><stop offset="0.55" stop-color="#2a7a5e"/><stop offset="1" stop-color="#1a4a3c"/></radialGradient>
<linearGradient id="gc2" x1="0" y1="0" x2="0" y2="1"><stop offset="0" stop-color="#a9d6f3" stop-opacity="0.1"/><stop offset="0.6" stop-color="#a4d4f4" stop-opacity="0.95"/><stop offset="1" stop-color="#a9d6f3" stop-opacity="0.8"/></linearGradient>
<linearGradient id="gd2" x1="0" y1="0" x2="0" y2="1"><stop offset="0" stop-color="#d7d4df"/><stop offset="1" stop-color="#cccad8"/></linearGradient>
<filter id="gf2" x="-10%" y="-10%" width="120%" height="120%"><feGaussianBlur stdDeviation="0.55"/></filter>
<clipPath id="gp2"><rect width="37.8" height="25.5"/></clipPath>
</defs>
<rect width="37.8" height="25.5" fill="url(#gd2)"/>
<g clip-path="url(#gp2)"><g filter="url(#gf2)">
<ellipse cx="13.200" cy="22.600" rx="1.700" ry="4.200" fill="url(#gc2)" opacity="0.8"/><ellipse cx="25.700" cy="22.600" rx="1.700" ry="4.200" fill="url(#gc2)" opacity="0.9"/>
<circle cx="12" cy="14.100" r="5.600" fill="#e3e1e8" opacity="0.7"/><circle cx="25.500" cy="14.100" r="5.600" fill="#e3e1e8" opacity="0.7"/>
<circle cx="12" cy="14.100" r="5" fill="url(#ga2)"/><circle cx="25.500" cy="14.100" r="5" fill="url(#gb2)"/>
</g></g></svg>
<div class="a" style="left:145.8px;top:267.08px;width:13.8px;height:13.8px;border-radius:50%;background:#1f9dd8;color:#fff;font-weight:bold;font-size:9px;line-height:13.8px;text-align:center;padding-top:0.9px">A</div>
<div class="t bl" style="left:231.6px;top:267.00px;">10013520 Sonnen...</div>
<div class="t bl" style="left:383.3px;top:267.00px;">/Sortiment/Demo</div>
<div class="t bl" style="left:659.3px;top:267.00px;">08.05.24</div>
<div class="t bl" style="left:792.5px;top:267.00px;">08.05.24</div>
<div class="t bl" style="left:925.6px;top:267.00px;">Rohdaten</div>
<div class="t bl" style="left:1077.9px;top:267.00px;">Neu</div>
<div class="hl" style="left:0;top:341.93px;width:1449px"></div>
<svg style="left:40.1px;top:300.7px" width="24.7" height="37.8" viewBox="0 0 24.7 37.8"><defs><filter id="sf" x="-10%" y="-10%" width="120%" height="120%"><feGaussianBlur stdDeviation="0.5"/></filter></defs>
<rect width="24.7" height="37.800" fill="#e2e3e7"/>
<g filter="url(#sf)"><path d="M8 5.600 C9.600 6.600 11 7.600 12.300 9 C13.600 7.600 15 6.600 16.600 5.600 L20 7.200 C21.600 11.600 22.700 19.600 23.500 27.400 L21.200 28.600 L19.300 18.400 C19.300 22.400 19.700 27.400 20.300 30.800 C15.200 32.400 9.800 32.400 4.600 30.800 C5.200 27.400 5.600 22.400 5.600 18.400 L3.400 28.600 L1.100 27.400 C1.900 19.600 3 11.600 4.600 7.200 Z" fill="#31466a"/>
<path d="M8 5.600 C9.600 6.600 11 7.600 12.300 9 C13.600 7.600 15 6.600 16.600 5.600 C15 5.200 9.600 5.200 8 5.600Z" fill="#1f3152"/>
<path d="M12.300 9 L12.300 14" stroke="#8a4a5a" stroke-width="0.600"/></g></svg>
<div class="a" style="left:145.8px;top:312.75px;width:13.8px;height:13.8px;border-radius:50%;background:#333;color:#fff;font-weight:bold;font-size:9px;line-height:13.8px;text-align:center;padding-top:0.9px">P</div>
<div class="t " style="left:231.6px;top:312.00px;">100192 Shirt mit Zi...</div>
<div class="t " style="left:383.3px;top:312.00px;">/Sortiment/Bekleidung/Damen/Oberteile/Shirts</div>
<div class="t " style="left:659.3px;top:312.00px;">08.05.24</div>
<div class="t " style="left:792.5px;top:312.00px;">08.05.24</div>
<div class="t " style="left:925.6px;top:312.00px;">Rohdaten</div>
<div class="t " style="left:1077.9px;top:312.00px;">Neu</div>
<div class="hl" style="left:0;top:387.60px;width:1449px"></div>
<svg style="left:40.1px;top:346.4px" width="24.7" height="37.8" viewBox="0 0 24.7 37.8"><defs><filter id="ff4" x="-15%" y="-15%" width="130%" height="130%"><feGaussianBlur stdDeviation="0.95"/></filter><clipPath id="fp4"><rect width="24.7" height="37.8"/></clipPath>
<linearGradient id="fl4" x1="0" y1="0" x2="1" y2="0.600"><stop offset="0" stop-color="#44577f"/><stop offset="1" stop-color="#384868"/></linearGradient></defs>
<rect width="24.7" height="37.800" fill="#1d2739"/>
<g clip-path="url(#fp4)"><g filter="url(#ff4)">
<path d="M10.200 16.900 L2.500 -1 L9.500 -1 Z" fill="#232e44"/>
<path d="M10.200 16.900 L9.500 -1 L15 -1 Z" fill="#141b2a"/>
<path d="M10.200 16.900 L15.500 -1 L26 -1 L26 23 Z" fill="url(#fl4)"/>
<path d="M10.200 16.900 L21.500 -1 L26 -1 L26 9 Z" fill="#232e44" opacity="0.550"/>
<path d="M10.200 16.900 L26 22.500 L26 30 Z" fill="#0e1420"/>
<path d="M10.200 16.900 L-1 12.500 L-1 20 Z" fill="#0e1420" opacity="0.900"/>
<path d="M10.200 16.900 L-1 7 L-1 11.500 Z" fill="#232e44" opacity="0.800"/>
<path d="M10.200 16.900 L-1 28 L-1 39 L5 39 Z" fill="#232e44" opacity="0.750"/>
<path d="M10.200 16.900 L6 39 L12 39 Z" fill="#141b2a"/>
<path d="M10.200 16.900 L13 39 L18.500 39 Z" fill="#232e44" opacity="0.800"/>
<path d="M10.200 16.900 L19.500 39 L26 39 L26 32 Z" fill="#141b2a" opacity="0.800"/>
</g></g></svg>
<div class="a" style="left:145.8px;top:358.42px;width:13.8px;height:13.8px;border-radius:50%;background:#333;color:#fff;font-weight:bold;font-size:9px;line-height:13.8px;text-align:center;padding-top:0.9px">A</div>
<div class="t " style="left:231.6px;top:358.00px;">10019251700 Shirt...</div>
<div class="t " style="left:383.3px;top:358.00px;">/Sortiment/Bekleidung/Damen/Oberteile/Shirts</div>
<div class="t " style="left:659.3px;top:358.00px;">08.05.24</div>
<div class="t " style="left:792.5px;top:358.00px;">08.05.24</div>
<div class="t " style="left:925.6px;top:358.00px;">Rohdaten</div>
<div class="t " style="left:1077.9px;top:358.00px;">Neu</div>
<div class="hl" style="left:0;top:433.27px;width:1449px"></div>
<svg style="left:40.1px;top:392.1px" width="24.7" height="37.8" viewBox="0 0 24.7 37.8"><defs><filter id="ff5" x="-15%" y="-15%" width="130%" height="130%"><feGaussianBlur stdDeviation="0.95"/></filter><clipPath id="fp5"><rect width="24.7" height="37.8"/></clipPath>
<linearGradient id="fl5" x1="0" y1="0" x2="1" y2="0.600"><stop offset="0" stop-color="#44577f"/><stop offset="1" stop-color="#384868"/></linearGradient></defs>
<rect width="24.7" height="37.800" fill="#1d2739"/>
<g clip-path="url(#fp5)"><g filter="url(#ff5)">
<path d="M10.200 16.900 L2.500 -1 L9.500 -1 Z" fill="#232e44"/>
<path d="M10.200 16.900 L9.500 -1 L15 -1 Z" fill="#141b2a"/>
<path d="M10.200 16.900 L15.500 -1 L26 -1 L26 23 Z" fill="url(#fl5)"/>
<path d="M10.200 16.900 L21.500 -1 L26 -1 L26 9 Z" fill="#232e44" opacity="0.550"/>
<path d="M10.200 16.900 L26 22.500 L26 30 Z" fill="#0e1420"/>
<path d="M10.200 16.900 L-1 12.500 L-1 20 Z" fill="#0e1420" opacity="0.900"/>
<path d="M10.200 16.900 L-1 7 L-1 11.500 Z" fill="#232e44" opacity="0.800"/>
<path d="M10.200 16.900 L-1 28 L-1 39 L5 39 Z" fill="#232e44" opacity="0.750"/>
<path d="M10.200 16.900 L6 39 L12 39 Z" fill="#141b2a"/>
<path d="M10.200 16.900 L13 39 L18.500 39 Z" fill="#232e44" opacity="0.800"/>
<path d="M10.200 16.900 L19.500 39 L26 39 L26 32 Z" fill="#141b2a" opacity="0.800"/>
</g></g></svg>
<div class="a" style="left:145.8px;top:404.09px;width:13.8px;height:13.8px;border-radius:50%;background:#333;color:#fff;font-weight:bold;font-size:9px;line-height:13.8px;text-align:center;padding-top:0.9px">V</div>
<div class="t " style="left:231.6px;top:404.00px;">10019251700002 ...</div>
<div class="t " style="left:383.3px;top:404.00px;">/Sortiment/Bekleidung/Damen/Oberteile/Shirts</div>
<div class="t " style="left:659.3px;top:404.00px;">08.05.24</div>
<div class="t " style="left:792.5px;top:404.00px;">08.05.24</div>
<div class="t " style="left:925.6px;top:404.00px;">Rohdaten</div>
<div class="t " style="left:1077.9px;top:404.00px;">Neu</div>
<div class="hl" style="left:0;top:478.94px;width:1449px"></div>
<svg style="left:40.1px;top:437.8px" width="24.7" height="37.8" viewBox="0 0 24.7 37.8"><defs><filter id="ff6" x="-15%" y="-15%" width="130%" height="130%"><feGaussianBlur stdDeviation="0.95"/></filter><clipPath id="fp6"><rect width="24.7" height="37.8"/></clipPath>
<linearGradient id="fl6" x1="0" y1="0" x2="1" y2="0.600"><stop offset="0" stop-color="#44577f"/><stop offset="1" stop-color="#384868"/></linearGradient></defs>
<rect width="24.7" height="37.800" fill="#1d2739"/>
<g clip-path="url(#fp6)"><g filter="url(#ff6)">
<path d="M10.200 16.900 L2.500 -1 L9.500 -1 Z" fill="#232e44"/>
<path d="M10.200 16.900 L9.500 -1 L15 -1 Z" fill="#141b2a"/>
<path d="M10.200 16.900 L15.500 -1 L26 -1 L26 23 Z" fill="url(#fl6)"/>
<path d="M10.200 16.900 L21.500 -1 L26 -1 L26 9 Z" fill="#232e44" opacity="0.550"/>
<path d="M10.200 16.900 L26 22.500 L26 30 Z" fill="#0e1420"/>
<path d="M10.200 16.900 L-1 12.500 L-1 20 Z" fill="#0e1420" opacity="0.900"/>
<path d="M10.200 16.900 L-1 7 L-1 11.500 Z" fill="#232e44" opacity="0.800"/>
<path d="M10.200 16.900 L-1 28 L-1 39 L5 39 Z" fill="#232e44" opacity="0.750"/>
<path d="M10.200 16.900 L6 39 L12 39 Z" fill="#141b2a"/>
<path d="M10.200 16.900 L13 39 L18.500 39 Z" fill="#232e44" opacity="0.800"/>
<path d="M10.200 16.900 L19.500 39 L26 39 L26 32 Z" fill="#141b2a" opacity="0.800"/>
</g></g></svg>
<div class="a" style="left:145.8px;top:449.75px;width:13.8px;height:13.8px;border-radius:50%;background:#333;color:#fff;font-weight:bold;font-size:9px;line-height:13.8px;text-align:center;padding-top:0.9px">V</div>
<div class="t " style="left:231.6px;top:450.00px;">10019251700003 ...</div>
<div class="t " style="left:383.3px;top:450.00px;">/Sortiment/Bekleidung/Damen/Oberteile/Shirts</div>
<div class="t " style="left:659.3px;top:450.00px;">08.05.24</div>
<div class="t " style="left:792.5px;top:450.00px;">08.05.24</div>
<div class="t " style="left:925.6px;top:450.00px;">Rohdaten</div>
<div class="t " style="left:1077.9px;top:450.00px;">Neu</div>
<div class="hl" style="left:0;top:524.61px;width:1449px"></div>
<svg style="left:40.1px;top:483.4px" width="24.7" height="37.8" viewBox="0 0 24.7 37.8"><defs><filter id="ff7" x="-15%" y="-15%" width="130%" height="130%"><feGaussianBlur stdDeviation="0.95"/></filter><clipPath id="fp7"><rect width="24.7" height="37.8"/></clipPath>
<linearGradient id="fl7" x1="0" y1="0" x2="1" y2="0.600"><stop offset="0" stop-color="#44577f"/><stop offset="1" stop-color="#384868"/></linearGradient></defs>
<rect width="24.7" height="37.800" fill="#1d2739"/>
<g clip-path="url(#fp7)"><g filter="url(#ff7)">
<path d="M10.200 16.900 L2.500 -1 L9.500 -1 Z" fill="#232e44"/>
<path d="M10.200 16.900 L9.500 -1 L15 -1 Z" fill="#141b2a"/>
<path d="M10.200 16.900 L15.500 -1 L26 -1 L26 23 Z" fill="url(#fl7)"/>
<path d="M10.200 16.900 L21.500 -1 L26 -1 L26 9 Z" fill="#232e44" opacity="0.550"/>
<path d="M10.200 16.900 L26 22.500 L26 30 Z" fill="#0e1420"/>
<path d="M10.200 16.900 L-1 12.500 L-1 20 Z" fill="#0e1420" opacity="0.900"/>
<path d="M10.200 16.900 L-1 7 L-1 11.500 Z" fill="#232e44" opacity="0.800"/>
<path d="M10.200 16.900 L-1 28 L-1 39 L5 39 Z" fill="#232e44" opacity="0.750"/>
<path d="M10.200 16.900 L6 39 L12 39 Z" fill="#141b2a"/>
<path d="M10.200 16.900 L13 39 L18.500 39 Z" fill="#232e44" opacity="0.800"/>
<path d="M10.200 16.900 L19.500 39 L26 39 L26 32 Z" fill="#141b2a" opacity="0.800"/>
</g></g></svg>
<div class="a" style="left:145.8px;top:495.43px;width:13.8px;height:13.8px;border-radius:50%;background:#333;color:#fff;font-weight:bold;font-size:9px;line-height:13.8px;text-align:center;padding-top:0.9px">V</div>
<div class="t " style="left:231.6px;top:495.00px;">10019251700004 ...</div>
<div class="t " style="left:383.3px;top:495.00px;">/Sortiment/Bekleidung/Damen/Oberteile/Shirts</div>
<div class="t " style="left:659.3px;top:495.00px;">08.05.24</div>
<div class="t " style="left:792.5px;top:495.00px;">08.05.24</div>
<div class="t " style="left:925.6px;top:495.00px;">Rohdaten</div>
<div class="t " style="left:1077.9px;top:495.00px;">Neu</div>
<div class="hl" style="left:0;top:570.28px;width:1449px"></div>
<svg style="left:40.1px;top:529.1px" width="24.7" height="37.8" viewBox="0 0 24.7 37.8"><defs><filter id="ff8" x="-15%" y="-15%" width="130%" height="130%"><feGaussianBlur stdDeviation="0.95"/></filter><clipPath id="fp8"><rect width="24.7" height="37.8"/></clipPath>
<linearGradient id="fl8" x1="0" y1="0" x2="1" y2="0.600"><stop offset="0" stop-color="#44577f"/><stop offset="1" stop-color="#384868"/></linearGradient></defs>
<rect width="24.7" height="37.800" fill="#1d2739"/>
<g clip-path="url(#fp8)"><g filter="url(#ff8)">
<path d="M10.200 16.900 L2.500 -1 L9.500 -1 Z" fill="#232e44"/>
<path d="M10.200 16.900 L9.500 -1 L15 -1 Z" fill="#141b2a"/>
<path d="M10.200 16.900 L15.500 -1 L26 -1 L26 23 Z" fill="url(#fl8)"/>
<path d="M10.200 16.900 L21.500 -1 L26 -1 L26 9 Z" fill="#232e44" opacity="0.550"/>
<path d="M10.200 16.900 L26 22.500 L26 30 Z" fill="#0e1420"/>
<path d="M10.200 16.900 L-1 12.500 L-1 20 Z" fill="#0e1420" opacity="0.900"/>
<path d="M10.200 16.900 L-1 7 L-1 11.500 Z" fill="#232e44" opacity="0.800"/>
<path d="M10.200 16.900 L-1 28 L-1 39 L5 39 Z" fill="#232e44" opacity="0.750"/>
<path d="M10.200 16.900 L6 39 L12 39 Z" fill="#141b2a"/>
<path d="M10.200 16.900 L13 39 L18.500 39 Z" fill="#232e44" opacity="0.800"/>
<path d="M10.200 16.900 L19.500 39 L26 39 L26 32 Z" fill="#141b2a" opacity="0.800"/>
</g></g></svg>
<div class="a" style="left:145.8px;top:541.10px;width:13.8px;height:13.8px;border-radius:50%;background:#333;color:#fff;font-weight:bold;font-size:9px;line-height:13.8px;text-align:center;padding-top:0.9px">V</div>
<div class="t " style="left:231.6px;top:541.00px;">10019251700005 ...</div>
<div class="t " style="left:383.3px;top:541.00px;">/Sortiment/Bekleidung/Damen/Oberteile/Shirts</div>
<div class="t " style="left:659.3px;top:541.00px;">08.05.24</div>
<div class="t " style="left:792.5px;top:541.00px;">08.05.24</div>
<div class="t " style="left:925.6px;top:541.00px;">Rohdaten</div>
<div class="t " style="left:1077.9px;top:541.00px;">Neu</div>
<div class="hl" style="left:0;top:615.95px;width:1449px"></div>
<svg style="left:40.1px;top:574.8px" width="24.7" height="37.8" viewBox="0 0 24.7 37.8"><defs><filter id="ff9" x="-15%" y="-15%" width="130%" height="130%"><feGaussianBlur stdDeviation="0.95"/></filter><clipPath id="fp9"><rect width="24.7" height="37.8"/></clipPath>
<linearGradient id="fl9" x1="0" y1="0" x2="1" y2="0.600"><stop offset="0" stop-color="#44577f"/><stop offset="1" stop-color="#384868"/></linearGradient></defs>
<rect width="24.7" height="37.800" fill="#1d2739"/>
<g clip-path="url(#fp9)"><g filter="url(#ff9)">
<path d="M10.200 16.900 L2.500 -1 L9.500 -1 Z" fill="#232e44"/>
<path d="M10.200 16.900 L9.500 -1 L15 -1 Z" fill="#141b2a"/>
<path d="M10.200 16.900 L15.500 -1 L26 -1 L26 23 Z" fill="url(#fl9)"/>
<path d="M10.200 16.900 L21.500 -1 L26 -1 L26 9 Z" fill="#232e44" opacity="0.550"/>
<path d="M10.200 16.900 L26 22.500 L26 30 Z" fill="#0e1420"/>
<path d="M10.200 16.900 L-1 12.500 L-1 20 Z" fill="#0e1420" opacity="0.900"/>
<path d="M10.200 16.900 L-1 7 L-1 11.500 Z" fill="#232e44" opacity="0.800"/>
<path d="M10.200 16.900 L-1 28 L-1 39 L5 39 Z" fill="#232e44" opacity="0.750"/>
<path d="M10.200 16.900 L6 39 L12 39 Z" fill="#141b2a"/>
<path d="M10.200 16.900 L13 39 L18.500 39 Z" fill="#232e44" opacity="0.800"/>
<path d="M10.200 16.900 L19.500 39 L26 39 L26 32 Z" fill="#141b2a" opacity="0.800"/>
</g></g></svg>
<div class="a" style="left:145.8px;top:586.76px;width:13.8px;height:13.8px;border-radius:50%;background:#333;color:#fff;font-weight:bold;font-size:9px;line-height:13.8px;text-align:center;padding-top:0.9px">V</div>
<div class="t " style="left:231.6px;top:587.00px;">10019251700006 ...</div>
<div class="t " style="left:383.3px;top:587.00px;">/Sortiment/Bekleidung/Damen/Oberteile/Shirts</div>
<div class="t " style="left:659.3px;top:587.00px;">08.05.24</div>
<div class="t " style="left:792.5px;top:587.00px;">08.05.24</div>
<div class="t " style="left:925.6px;top:587.00px;">Rohdaten</div>
<div class="t " style="left:1077.9px;top:587.00px;">Neu</div>
<div class="hl" style="left:0;top:661.62px;width:1449px"></div>
<svg style="left:40.1px;top:620.4px" width="24.7" height="37.8" viewBox="0 0 24.7 37.8"><defs><filter id="ff10" x="-15%" y="-15%" width="130%" height="130%"><feGaussianBlur stdDeviation="0.95"/></filter><clipPath id="fp10"><rect width="24.7" height="37.8"/></clipPath>
<linearGradient id="fl10" x1="0" y1="0" x2="1" y2="0.600"><stop offset="0" stop-color="#266169"/><stop offset="1" stop-color="#1f4f57"/></linearGradient></defs>
<rect width="24.7" height="37.800" fill="#15363a"/>
<g clip-path="url(#fp10)"><g filter="url(#ff10)">
<path d="M10.200 16.900 L2.500 -1 L9.500 -1 Z" fill="#193f44"/>
<path d="M10.200 16.900 L9.500 -1 L15 -1 Z" fill="#0e272b"/>
<path d="M10.200 16.900 L15.500 -1 L26 -1 L26 23 Z" fill="url(#fl10)"/>
<path d="M10.200 16.900 L21.500 -1 L26 -1 L26 9 Z" fill="#193f44" opacity="0.550"/>
<path d="M10.200 16.900 L26 22.500 L26 30 Z" fill="#0a1d21"/>
<path d="M10.200 16.900 L-1 12.500 L-1 20 Z" fill="#0a1d21" opacity="0.900"/>
<path d="M10.200 16.900 L-1 7 L-1 11.500 Z" fill="#193f44" opacity="0.800"/>
<path d="M10.200 16.900 L-1 28 L-1 39 L5 39 Z" fill="#193f44" opacity="0.750"/>
<path d="M10.200 16.900 L6 39 L12 39 Z" fill="#0e272b"/>
<path d="M10.200 16.900 L13 39 L18.500 39 Z" fill="#193f44" opacity="0.800"/>
<path d="M10.200 16.900 L19.500 39 L26 39 L26 32 Z" fill="#0e272b" opacity="0.800"/>
</g></g></svg>
<div class="a" style="left:145.8px;top:632.44px;width:13.8px;height:13.8px;border-radius:50%;background:#333;color:#fff;font-weight:bold;font-size:9px;line-height:13.8px;text-align:center;padding-top:0.9px">A</div>
<div class="t " style="left:231.6px;top:632.00px;">10019285500 Shirt...</div>
<div class="t " style="left:383.3px;top:632.00px;">/Sortiment/Bekleidung/Damen/Oberteile/Shirts</div>
<div class="t " style="left:659.3px;top:632.00px;">08.05.24</div>
<div class="t " style="left:792.5px;top:632.00px;">08.05.24</div>
<div class="t " style="left:925.6px;top:632.00px;">Rohdaten</div>
<div class="t " style="left:1077.9px;top:632.00px;">Neu</div>
<div class="hl" style="left:0;top:707.29px;width:1449px"></div>
<svg style="left:40.1px;top:666.1px" width="24.7" height="37.8" viewBox="0 0 24.7 37.8"><defs><filter id="ff11" x="-15%" y="-15%" width="130%" height="130%"><feGaussianBlur stdDeviation="0.95"/></filter><clipPath id="fp11"><rect width="24.7" height="37.8"/></clipPath>
<linearGradient id="fl11" x1="0" y1="0" x2="1" y2="0.600"><stop offset="0" stop-color="#266169"/><stop offset="1" stop-color="#1f4f57"/></linearGradient></defs>
<rect width="24.7" height="37.800" fill="#15363a"/>
<g clip-path="url(#fp11)"><g filter="url(#ff11)">
<path d="M10.200 16.900 L2.500 -1 L9.500 -1 Z" fill="#193f44"/>
<path d="M10.200 16.900 L9.500 -1 L15 -1 Z" fill="#0e272b"/>
<path d="M10.200 16.900 L15.500 -1 L26 -1 L26 23 Z" fill="url(#fl11)"/>
<path d="M10.200 16.900 L21.500 -1 L26 -1 L26 9 Z" fill="#193f44" opacity="0.550"/>
<path d="M10.200 16.900 L26 22.500 L26 30 Z" fill="#0a1d21"/>
<path d="M10.200 16.900 L-1 12.500 L-1 20 Z" fill="#0a1d21" opacity="0.900"/>
<path d="M10.200 16.900 L-1 7 L-1 11.500 Z" fill="#193f44" opacity="0.800"/>
<path d="M10.200 16.900 L-1 28 L-1 39 L5 39 Z" fill="#193f44" opacity="0.750"/>
<path d="M10.200 16.900 L6 39 L12 39 Z" fill="#0e272b"/>
<path d="M10.200 16.900 L13 39 L18.500 39 Z" fill="#193f44" opacity="0.800"/>
<path d="M10.200 16.900 L19.500 39 L26 39 L26 32 Z" fill="#0e272b" opacity="0.800"/>
</g></g></svg>
<div class="a" style="left:145.8px;top:678.11px;width:13.8px;height:13.8px;border-radius:50%;background:#333;color:#fff;font-weight:bold;font-size:9px;line-height:13.8px;text-align:center;padding-top:0.9px">V</div>
<div class="t " style="left:231.6px;top:678.00px;">10019285500002 ...</div>
<div class="t " style="left:383.3px;top:678.00px;">/Sortiment/Bekleidung/Damen/Oberteile/Shirts</div>
<div class="t " style="left:659.3px;top:678.00px;">08.05.24</div>
<div class="t " style="left:792.5px;top:678.00px;">08.05.24</div>
<div class="t " style="left:925.6px;top:678.00px;">Rohdaten</div>
<div class="t " style="left:1077.9px;top:678.00px;">Neu</div>
<div class="hl" style="left:0;top:752.96px;width:1449px"></div>
<svg style="left:40.1px;top:711.8px" width="24.7" height="37.8" viewBox="0 0 24.7 37.8"><defs><filter id="ff12" x="-15%" y="-15%" width="130%" height="130%"><feGaussianBlur stdDeviation="0.95"/></filter><clipPath id="fp12"><rect width="24.7" height="37.8"/></clipPath>
<linearGradient id="fl12" x1="0" y1="0" x2="1" y2="0.600"><stop offset="0" stop-color="#266169"/><stop offset="1" stop-color="#1f4f57"/></linearGradient></defs>
<rect width="24.7" height="37.800" fill="#15363a"/>
<g clip-path="url(#fp12)"><g filter="url(#ff12)">
<path d="M10.200 16.900 L2.500 -1 L9.500 -1 Z" fill="#193f44"/>
<path d="M10.200 16.900 L9.500 -1 L15 -1 Z" fill="#0e272b"/>
<path d="M10.200 16.900 L15.500 -1 L26 -1 L26 23 Z" fill="url(#fl12)"/>
<path d="M10.200 16.900 L21.500 -1 L26 -1 L26 9 Z" fill="#193f44" opacity="0.550"/>
<path d="M10.200 16.900 L26 22.500 L26 30 Z" fill="#0a1d21"/>
<path d="M10.200 16.900 L-1 12.500 L-1 20 Z" fill="#0a1d21" opacity="0.900"/>
<path d="M10.200 16.900 L-1 7 L-1 11.500 Z" fill="#193f44" opacity="0.800"/>
<path d="M10.200 16.900 L-1 28 L-1 39 L5 39 Z" fill="#193f44" opacity="0.750"/>
<path d="M10.200 16.900 L6 39 L12 39 Z" fill="#0e272b"/>
<path d="M10.200 16.900 L13 39 L18.500 39 Z" fill="#193f44" opacity="0.800"/>
<path d="M10.200 16.900 L19.500 39 L26 39 L26 32 Z" fill="#0e272b" opacity="0.800"/>
</g></g></svg>
<div class="a" style="left:145.8px;top:723.77px;width:13.8px;height:13.8px;border-radius:50%;background:#333;color:#fff;font-weight:bold;font-size:9px;line-height:13.8px;text-align:center;padding-top:0.9px">V</div>
<div class="t " style="left:231.6px;top:724.00px;">10019285500003 ...</div>
<div class="t " style="left:383.3px;top:724.00px;">/Sortiment/Bekleidung/Damen/Oberteile/Shirts</div>
<div class="t " style="left:659.3px;top:724.00px;">08.05.24</div>
<div class="t " style="left:792.5px;top:724.00px;">08.05.24</div>
<div class="t " style="left:925.6px;top:724.00px;">Rohdaten</div>
<div class="t " style="left:1077.9px;top:724.00px;">Neu</div>
<div class="hl" style="left:0;top:798.63px;width:1449px"></div>
<svg style="left:40.1px;top:757.4px" width="24.7" height="37.8" viewBox="0 0 24.7 37.8"><defs><filter id="ff13" x="-15%" y="-15%" width="130%" height="130%"><feGaussianBlur stdDeviation="0.95"/></filter><clipPath id="fp13"><rect width="24.7" height="37.8"/></clipPath>
<linearGradient id="fl13" x1="0" y1="0" x2="1" y2="0.600"><stop offset="0" stop-color="#266169"/><stop offset="1" stop-color="#1f4f57"/></linearGradient></defs>
<rect width="24.7" height="37.800" fill="#15363a"/>
<g clip-path="url(#fp13)"><g filter="url(#ff13)">
<path d="M10.200 16.900 L2.500 -1 L9.500 -1 Z" fill="#193f44"/>
<path d="M10.200 16.900 L9.500 -1 L15 -1 Z" fill="#0e272b"/>
<path d="M10.200 16.900 L15.500 -1 L26 -1 L26 23 Z" fill="url(#fl13)"/>
<path d="M10.200 16.900 L21.500 -1 L26 -1 L26 9 Z" fill="#193f44" opacity="0.550"/>
<path d="M10.200 16.900 L26 22.500 L26 30 Z" fill="#0a1d21"/>
<path d="M10.200 16.900 L-1 12.500 L-1 20 Z" fill="#0a1d21" opacity="0.900"/>
<path d="M10.200 16.900 L-1 7 L-1 11.500 Z" fill="#193f44" opacity="0.800"/>
<path d="M10.200 16.900 L-1 28 L-1 39 L5 39 Z" fill="#193f44" opacity="0.750"/>
<path d="M10.200 16.900 L6 39 L12 39 Z" fill="#0e272b"/>
<path d="M10.200 16.900 L13 39 L18.500 39 Z" fill="#193f44" opacity="0.800"/>
<path d="M10.200 16.900 L19.500 39 L26 39 L26 32 Z" fill="#0e272b" opacity="0.800"/>
</g></g></svg>
<div class="a" style="left:145.8px;top:769.45px;width:13.8px;height:13.8px;border-radius:50%;background:#333;color:#fff;font-weight:bold;font-size:9px;line-height:13.8px;text-align:center;padding-top:0.9px">V</div>
<div class="t " style="left:231.6px;top:769.00px;">10019285500004 ...</div>
<div class="t " style="left:383.3px;top:769.00px;">/Sortiment/Bekleidung/Damen/Oberteile/Shirts</div>
<div class="t " style="left:659.3px;top:769.00px;">08.05.24</div>
<div class="t " style="left:792.5px;top:769.00px;">08.05.24</div>
<div class="t " style="left:925.6px;top:769.00px;">Rohdaten</div>
<div class="t " style="left:1077.9px;top:769.00px;">Neu</div>
<div class="hl" style="left:0;top:844.30px;width:1449px"></div>
<svg style="left:40.1px;top:803.1px" width="24.7" height="37.8" viewBox="0 0 24.7 37.8"><defs><filter id="ff14" x="-15%" y="-15%" width="130%" height="130%"><feGaussianBlur stdDeviation="0.95"/></filter><clipPath id="fp14"><rect width="24.7" height="37.8"/></clipPath>
<linearGradient id="fl14" x1="0" y1="0" x2="1" y2="0.600"><stop offset="0" stop-color="#266169"/><stop offset="1" stop-color="#1f4f57"/></linearGradient></defs>
<rect width="24.7" height="37.800" fill="#15363a"/>
<g clip-path="url(#fp14)"><g filter="url(#ff14)">
<path d="M10.200 16.900 L2.500 -1 L9.500 -1 Z" fill="#193f44"/>
<path d="M10.200 16.900 L9.500 -1 L15 -1 Z" fill="#0e272b"/>
<path d="M10.200 16.900 L15.500 -1 L26 -1 L26 23 Z" fill="url(#fl14)"/>
<path d="M10.200 16.900 L21.500 -1 L26 -1 L26 9 Z" fill="#193f44" opacity="0.550"/>
<path d="M10.200 16.900 L26 22.500 L26 30 Z" fill="#0a1d21"/>
<path d="M10.200 16.900 L-1 12.500 L-1 20 Z" fill="#0a1d21" opacity="0.900"/>
<path d="M10.200 16.900 L-1 7 L-1 11.500 Z" fill="#193f44" opacity="0.800"/>
<path d="M10.200 16.900 L-1 28 L-1 39 L5 39 Z" fill="#193f44" opacity="0.750"/>
<path d="M10.200 16.900 L6 39 L12 39 Z" fill="#0e272b"/>
<path d="M10.200 16.900 L13 39 L18.500 39 Z" fill="#193f44" opacity="0.800"/>
<path d="M10.200 16.900 L19.500 39 L26 39 L26 32 Z" fill="#0e272b" opacity="0.800"/>
</g></g></svg>
<div class="a" style="left:145.8px;top:815.12px;width:13.8px;height:13.8px;border-radius:50%;background:#333;color:#fff;font-weight:bold;font-size:9px;line-height:13.8px;text-align:center;padding-top:0.9px">V</div>
<div class="t " style="left:231.6px;top:815.00px;">10019285500005 ...</div>
<div class="t " style="left:383.3px;top:815.00px;">/Sortiment/Bekleidung/Damen/Oberteile/Shirts</div>
<div class="t " style="left:659.3px;top:815.00px;">08.05.24</div>
<div class="t " style="left:792.5px;top:815.00px;">08.05.24</div>
<div class="t " style="left:925.6px;top:815.00px;">Rohdaten</div>
<div class="t " style="left:1077.9px;top:815.00px;">Neu</div>
<div class="hl" style="left:0;top:889.97px;width:1449px"></div>
<svg style="left:40.1px;top:848.8px" width="24.7" height="37.8" viewBox="0 0 24.7 37.8"><defs><filter id="ff15" x="-15%" y="-15%" width="130%" height="130%"><feGaussianBlur stdDeviation="0.95"/></filter><clipPath id="fp15"><rect width="24.7" height="37.8"/></clipPath>
<linearGradient id="fl15" x1="0" y1="0" x2="1" y2="0.600"><stop offset="0" stop-color="#266169"/><stop offset="1" stop-color="#1f4f57"/></linearGradient></defs>
<rect width="24.7" height="37.800" fill="#15363a"/>
<g clip-path="url(#fp15)"><g filter="url(#ff15)">
<path d="M10.200 16.900 L2.500 -1 L9.500 -1 Z" fill="#193f44"/>
<path d="M10.200 16.900 L9.500 -1 L15 -1 Z" fill="#0e272b"/>
<path d="M10.200 16.900 L15.500 -1 L26 -1 L26 23 Z" fill="url(#fl15)"/>
<path d="M10.200 16.900 L21.500 -1 L26 -1 L26 9 Z" fill="#193f44" opacity="0.550"/>
<path d="M10.200 16.900 L26 22.500 L26 30 Z" fill="#0a1d21"/>
<path d="M10.200 16.900 L-1 12.500 L-1 20 Z" fill="#0a1d21" opacity="0.900"/>
<path d="M10.200 16.900 L-1 7 L-1 11.500 Z" fill="#193f44" opacity="0.800"/>
<path d="M10.200 16.900 L-1 28 L-1 39 L5 39 Z" fill="#193f44" opacity="0.750"/>
<path d="M10.200 16.900 L6 39 L12 39 Z" fill="#0e272b"/>
<path d="M10.200 16.900 L13 39 L18.500 39 Z" fill="#193f44" opacity="0.800"/>
<path d="M10.200 16.900 L19.500 39 L26 39 L26 32 Z" fill="#0e272b" opacity="0.800"/>
</g></g></svg>
<div class="a" style="left:145.8px;top:860.79px;width:13.8px;height:13.8px;border-radius:50%;background:#333;color:#fff;font-weight:bold;font-size:9px;line-height:13.8px;text-align:center;padding-top:0.9px">V</div>
<div class="t " style="left:231.6px;top:861.00px;">10019285500006 ...</div>
<div class="t " style="left:383.3px;top:861.00px;">/Sortiment/Bekleidung/Damen/Oberteile/Shirts</div>
<div class="t " style="left:659.3px;top:861.00px;">08.05.24</div>
<div class="t " style="left:792.5px;top:861.00px;">08.05.24</div>
<div class="t " style="left:925.6px;top:861.00px;">Rohdaten</div>
<div class="t " style="left:1077.9px;top:861.00px;">Neu</div>
</div>
<div class="a" style="left:1796.5px;top:160px;width:16.5px;height:713.3px;background:#fafafa"></div>
<svg style="left:0;top:0" width="1" height="1"><path d="M1799.200 174 L1808 174 L1803.600 167 Z" fill="#8a8a8a"/><path d="M1799.200 858.2 L1808 858.2 L1803.600 865.4 Z" fill="#8a8a8a"/></svg>
<div class="a" style="left:1799.4px;top:182.2px;width:8.4px;height:259.6px;border-radius:4.2px;background:#8c8c8c"></div>
<div class="t " style="left:1970.2px;top:12.00px;">Detailansicht</div>
<div class="t " style="left:2058.8px;top:12.00px;">Produkt Beschreibung</div>
<div class="t " style="left:2193.8px;top:12.00px;color:#2a9ad8">Produkt Details</div>
<div class="a" style="left:2222.6px;top:43px;width:91.3px;height:28px;border-radius:4px;background:#999"></div>
<svg style="left:2230.8px;top:49.1px" width="15.8" height="15.8" viewBox="0 0 15.8 15.8"><circle cx="7.9" cy="7.9" r="7.9" fill="#fff"/><path d="M5.700 5.700 L10.100 10.100 M10.100 5.700 L5.700 10.100" stroke="#8a8a8a" stroke-width="1.1" stroke-linecap="round"/></svg>
<div class="t " style="left:2254.3px;top:50.00px;color:#fff;-webkit-text-stroke:0.35px #fff">Verwerfen</div>
<div class="a" style="left:2321.4px;top:43px;width:91.5px;height:28px;border-radius:4px;background:#10b759"></div>
<svg style="left:2330.6px;top:51.8px" width="14.6" height="10.8" viewBox="0 0 14.6 10.8"><path d="M1.200 5.800 L5.200 9.500 L13.400 1.300" fill="none" stroke="#f2fff6" stroke-width="2.1" stroke-linecap="round" stroke-linejoin="round"/></svg>
<div class="t " style="left:2353.3px;top:50.00px;color:#f4fff7;-webkit-text-stroke:0.35px #f4fff7">Speichern</div>
<div class="t b" style="left:1829.0px;top:124.00px;">Kommentare</div>
<svg style="left:2401.6px;top:127.4px" width="11.2" height="6.4" viewBox="0 0 11.2 6.4"><path d="M0.900 5.500 L5.600 0.900 L10.300 5.500" fill="none" stroke="#3f3f3f" stroke-width="1.6" stroke-linecap="round" stroke-linejoin="round"/></svg>
<svg style="left:1832.10px;top:154.10px" width="15.40" height="15.30" viewBox="0 0 15.4 15.3" ><rect x="0.2" y="0.2" width="1.8" height="15.1" rx="0.6" fill="#3c3c3c" opacity="0.9"/><path d="M3.100 0.700 C5.300 -0.300 7 0 8.600 0.800 C10.300 1.600 12.400 1.400 15.300 0 L15.300 9.200 C12.400 10.700 10.300 10.800 8.600 10 C7 9.300 5.300 9 3.100 9.800 Z" fill="#3c3c3c"/></svg>
<svg style="left:1851.10px;top:154.10px" width="19.60" height="15.30" viewBox="0 0 19.6 15.3" ><g fill="none" stroke="#3c3c3c" stroke-width="1.700" stroke-linecap="round"><ellipse cx="0" cy="0" rx="5.600" ry="3.200" transform="translate(5.900 10.300) rotate(-42)" stroke-dasharray="1.500 5 40"/><ellipse cx="0" cy="0" rx="5.600" ry="3.200" transform="translate(13.400 5.800) rotate(-42)" stroke-dasharray="15.500 5 40"/><path d="M0.300 0.300 L19.300 15.200" stroke-width="1.300"/></g></svg>
<div class="inp" style="top:169px;height:31px"></div>
<div class="a" style="left:1836.9px;top:176.3px;width:59px;height:16.4px;background:#c9c9c9"></div>
<div class="t " style="left:1837.8px;top:177.00px;">Kommentar</div>
<div class="hl1" style="left:1813.9px;top:209.6px;width:615px"></div>
<div class="t b" style="left:1829.0px;top:221.00px;">Produktdetails</div>
<svg style="left:2401.6px;top:224.4px" width="11.2" height="6.4" viewBox="0 0 11.2 6.4"><path d="M0.900 5.500 L5.600 0.900 L10.300 5.500" fill="none" stroke="#3f3f3f" stroke-width="1.6" stroke-linecap="round" stroke-linejoin="round"/></svg>
<div class="t b" style="left:1829.0px;top:252.00px;letter-spacing:-0.11px">Bulletpoint 1</div>
<svg style="left:1910.60px;top:251.30px" width="15.40" height="15.30" viewBox="0 0 15.4 15.3" ><rect x="0.2" y="0.2" width="1.8" height="15.1" rx="0.6" fill="#3c3c3c" opacity="0.9"/><path d="M3.100 0.700 C5.300 -0.300 7 0 8.600 0.800 C10.300 1.600 12.400 1.400 15.300 0 L15.300 9.200 C12.400 10.700 10.300 10.800 8.600 10 C7 9.300 5.300 9 3.100 9.800 Z" fill="#3c3c3c"/></svg>
<svg style="left:1930.10px;top:251.90px" width="18.60" height="13.80" viewBox="0 0 18.6 13.8" ><g fill="none" stroke="#3c3c3c" stroke-width="1.85" stroke-linecap="round"><ellipse cx="0" cy="0" rx="6.300" ry="3.500" transform="translate(6.250 8) rotate(-40)" stroke-dasharray="2.500 4 40"/><ellipse cx="0" cy="0" rx="6.300" ry="3.500" transform="translate(12.650 5.750) rotate(-40)" stroke-dasharray="18.200 4 40"/></g></svg>
<div class="inp" style="top:268px;height:30px"></div>
<div class="t " style="left:1837.8px;top:276.00px;">UV-Schutz</div>
<div class="t b" style="left:1829.0px;top:316.00px;letter-spacing:-0.11px">Bulletpoint 2</div>
<svg style="left:1910.60px;top:315.17px" width="15.40" height="15.30" viewBox="0 0 15.4 15.3" ><rect x="0.2" y="0.2" width="1.8" height="15.1" rx="0.6" fill="#3c3c3c" opacity="0.9"/><path d="M3.100 0.700 C5.300 -0.300 7 0 8.600 0.800 C10.300 1.600 12.400 1.400 15.300 0 L15.300 9.200 C12.400 10.700 10.300 10.800 8.600 10 C7 9.300 5.300 9 3.100 9.800 Z" fill="#3c3c3c"/></svg>
<svg style="left:1930.10px;top:315.77px" width="18.60" height="13.80" viewBox="0 0 18.6 13.8" ><g fill="none" stroke="#3c3c3c" stroke-width="1.85" stroke-linecap="round"><ellipse cx="0" cy="0" rx="6.300" ry="3.500" transform="translate(6.250 8) rotate(-40)" stroke-dasharray="2.500 4 40"/><ellipse cx="0" cy="0" rx="6.300" ry="3.500" transform="translate(12.650 5.750) rotate(-40)" stroke-dasharray="18.200 4 40"/></g></svg>
<div class="inp" style="top:332px;height:30px"></div>
<div class="t " style="left:1837.8px;top:340.00px;">Scharfer Kontrast</div>
<div class="t b" style="left:1829.0px;top:380.00px;letter-spacing:-0.11px">Bulletpoint 3</div>
<svg style="left:1910.60px;top:379.04px" width="15.40" height="15.30" viewBox="0 0 15.4 15.3" ><rect x="0.2" y="0.2" width="1.8" height="15.1" rx="0.6" fill="#3c3c3c" opacity="0.9"/><path d="M3.100 0.700 C5.300 -0.300 7 0 8.600 0.800 C10.300 1.600 12.400 1.400 15.300 0 L15.300 9.200 C12.400 10.700 10.300 10.800 8.600 10 C7 9.300 5.300 9 3.100 9.800 Z" fill="#3c3c3c"/></svg>
<svg style="left:1930.10px;top:379.64px" width="18.60" height="13.80" viewBox="0 0 18.6 13.8" ><g fill="none" stroke="#3c3c3c" stroke-width="1.85" stroke-linecap="round"><ellipse cx="0" cy="0" rx="6.300" ry="3.500" transform="translate(6.250 8) rotate(-40)" stroke-dasharray="2.500 4 40"/><ellipse cx="0" cy="0" rx="6.300" ry="3.500" transform="translate(12.650 5.750) rotate(-40)" stroke-dasharray="18.200 4 40"/></g></svg>
<div class="inp" style="top:396px;height:30px"></div>
<div class="t " style="left:1837.8px;top:403.00px;">Anatomischer Nasensteg</div>
<div class="t b" style="left:1829.0px;top:443.00px;letter-spacing:-0.11px">Bulletpoint 4</div>
<svg style="left:1910.60px;top:442.91px" width="15.40" height="15.30" viewBox="0 0 15.4 15.3" ><rect x="0.2" y="0.2" width="1.8" height="15.1" rx="0.6" fill="#3c3c3c" opacity="0.9"/><path d="M3.100 0.700 C5.300 -0.300 7 0 8.600 0.800 C10.300 1.600 12.400 1.400 15.300 0 L15.300 9.200 C12.400 10.700 10.300 10.800 8.600 10 C7 9.300 5.300 9 3.100 9.800 Z" fill="#3c3c3c"/></svg>
<svg style="left:1930.10px;top:443.51px" width="18.60" height="13.80" viewBox="0 0 18.6 13.8" ><g fill="none" stroke="#3c3c3c" stroke-width="1.85" stroke-linecap="round"><ellipse cx="0" cy="0" rx="6.300" ry="3.500" transform="translate(6.250 8) rotate(-40)" stroke-dasharray="2.500 4 40"/><ellipse cx="0" cy="0" rx="6.300" ry="3.500" transform="translate(12.650 5.750) rotate(-40)" stroke-dasharray="18.200 4 40"/></g></svg>
<div class="inp" style="top:460px;height:30px"></div>
<div class="t " style="left:1837.8px;top:467.00px;">Nachhaltig 70% Recycling</div>
<div class="t b" style="left:1829.0px;top:507.00px;letter-spacing:-0.11px">Bulletpoint 5</div>
<svg style="left:1910.60px;top:506.78px" width="15.40" height="15.30" viewBox="0 0 15.4 15.3" ><rect x="0.2" y="0.2" width="1.8" height="15.1" rx="0.6" fill="#3c3c3c" opacity="0.9"/><path d="M3.100 0.700 C5.300 -0.300 7 0 8.600 0.800 C10.300 1.600 12.400 1.400 15.300 0 L15.300 9.200 C12.400 10.700 10.300 10.800 8.600 10 C7 9.300 5.300 9 3.100 9.800 Z" fill="#3c3c3c"/></svg>
<svg style="left:1930.10px;top:507.38px" width="18.60" height="13.80" viewBox="0 0 18.6 13.8" ><g fill="none" stroke="#3c3c3c" stroke-width="1.85" stroke-linecap="round"><ellipse cx="0" cy="0" rx="6.300" ry="3.500" transform="translate(6.250 8) rotate(-40)" stroke-dasharray="2.500 4 40"/><ellipse cx="0" cy="0" rx="6.300" ry="3.500" transform="translate(12.650 5.750) rotate(-40)" stroke-dasharray="18.200 4 40"/></g></svg>
<div class="inp" style="top:523px;height:31px"></div>
<div class="t " style="left:1837.8px;top:531.00px;">Glas mit Farbverlauf</div>
<div class="hl1" style="left:1813.9px;top:563.6px;width:615px"></div>
</div>
</body></html>
